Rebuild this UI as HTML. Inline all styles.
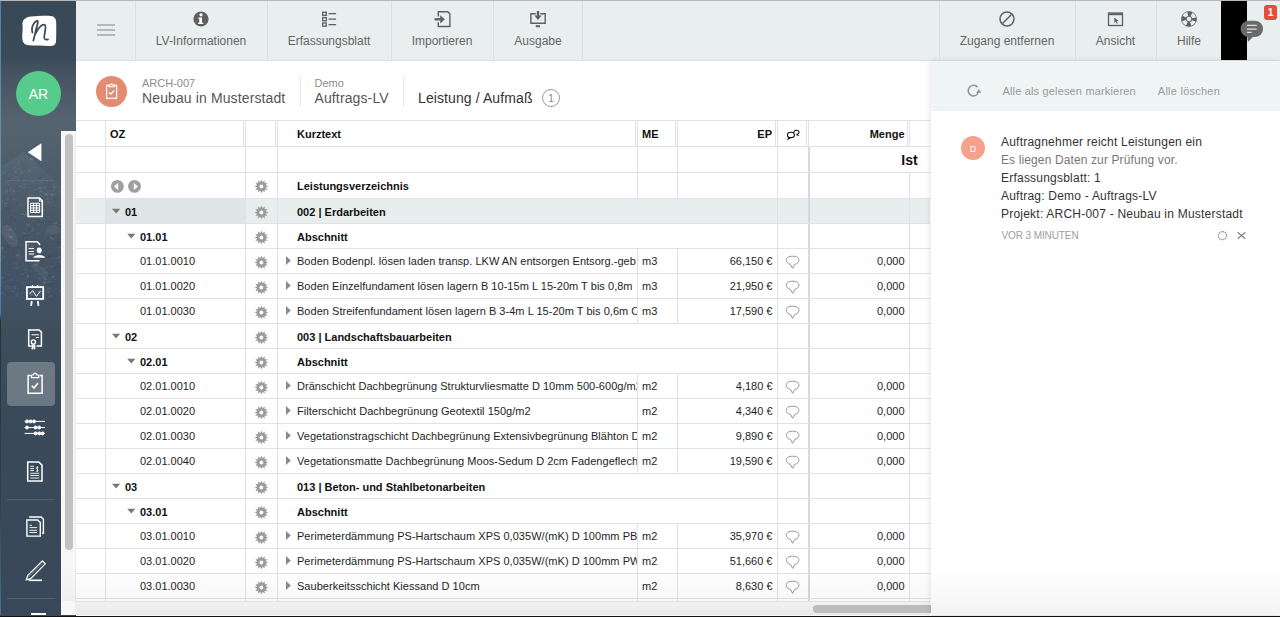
<!DOCTYPE html><html><head><meta charset="utf-8"><title>LV</title><style>
*{margin:0;padding:0;box-sizing:border-box}
html,body{width:1280px;height:617px;overflow:hidden;background:#fff;font-family:"Liberation Sans",sans-serif}
.t{position:absolute;white-space:nowrap}
.r{position:absolute}
svg{position:absolute;overflow:visible}
</style></head><body>
<div class="r" style="left:76px;top:1px;width:1204px;height:59px;background:#e9eeee;"></div>
<div class="r" style="left:76px;top:60px;width:1204px;height:1px;background:#dce1e2;"></div>
<div class="r" style="left:135px;top:1px;width:1px;height:59px;background:#dadfe0;"></div>
<div class="r" style="left:267px;top:1px;width:1px;height:59px;background:#dadfe0;"></div>
<div class="r" style="left:391px;top:1px;width:1px;height:59px;background:#dadfe0;"></div>
<div class="r" style="left:493px;top:1px;width:1px;height:59px;background:#dadfe0;"></div>
<div class="r" style="left:582px;top:1px;width:1px;height:59px;background:#dadfe0;"></div>
<div class="r" style="left:939px;top:1px;width:1px;height:59px;background:#dadfe0;"></div>
<div class="r" style="left:1075px;top:1px;width:1px;height:59px;background:#dadfe0;"></div>
<div class="r" style="left:1156px;top:1px;width:1px;height:59px;background:#dadfe0;"></div>
<div class="r" style="left:97px;top:24px;width:18px;height:2px;background:#b4b9bc;"></div>
<div class="r" style="left:97px;top:29px;width:18px;height:2px;background:#b4b9bc;"></div>
<div class="r" style="left:97px;top:34px;width:18px;height:2px;background:#b4b9bc;"></div>
<div class="t" style="top:30.84px;font-size:12px;line-height:20px;color:#666;left:51px;width:300px;text-align:center;">LV-Informationen</div>
<div class="t" style="top:30.84px;font-size:12px;line-height:20px;color:#666;left:179px;width:300px;text-align:center;">Erfassungsblatt</div>
<div class="t" style="top:30.84px;font-size:12px;line-height:20px;color:#666;left:292px;width:300px;text-align:center;">Importieren</div>
<div class="t" style="top:30.84px;font-size:12px;line-height:20px;color:#666;left:388px;width:300px;text-align:center;">Ausgabe</div>
<div class="t" style="top:30.84px;font-size:12px;line-height:20px;color:#666;left:857px;width:300px;text-align:center;">Zugang entfernen</div>
<div class="t" style="top:30.84px;font-size:12px;line-height:20px;color:#666;left:965.5px;width:300px;text-align:center;">Ansicht</div>
<div class="t" style="top:30.84px;font-size:12px;line-height:20px;color:#666;left:1039px;width:300px;text-align:center;">Hilfe</div>
<svg style="left:0;top:0" width="1" height="1"><circle cx="201" cy="19" r="7.6" fill="#606060"/><circle cx="201" cy="14.8" r="1.6" fill="#fff"/><path d="M199 17.6h3v5.2h1.3v1.3h-5.3v-1.3h1.3v-3.9h-1.3z" fill="#fff"/></svg>
<svg style="left:0;top:0" width="1" height="1" fill="none" stroke="#606060" stroke-width="1.3"><rect x="322.7" y="12.2" width="3.6" height="3.2"/><rect x="322.7" y="17.6" width="3.6" height="3.2"/><rect x="322.7" y="23" width="3.6" height="3.2"/><path d="M328.5 13.6h7.6M328.5 19.1h7.6M328.5 24.6h7.6" stroke-width="1.4"/></svg>
<svg style="left:0;top:0" width="1" height="1" fill="none" stroke="#606060" stroke-width="1.4"><path d="M438.3 16.5V11.8h9.5l2.1 2.1v12.6h-11.6v-4.3"/><path d="M434.6 19.3h6" stroke-width="2.4"/><path d="M440.2 15.2l4.7 4.1-4.7 4.1z" fill="#606060" stroke="none"/></svg>
<svg style="left:0;top:0" width="1" height="1" fill="none" stroke="#606060" stroke-width="1.4"><path d="M535.8 13.7h-4.9v9.5h14.3v-9.5h-4.9"/><path d="M538 11v5" stroke-width="2.4"/><path d="M534.4 15.6h7.2L538 20z" fill="#606060" stroke="none"/><rect x="535.8" y="25.2" width="4.3" height="2" fill="#606060" stroke="none"/></svg>
<svg style="left:0;top:0" width="1" height="1" fill="none" stroke="#606060" stroke-width="1.5"><circle cx="1007" cy="19" r="7"/><path d="M1011.8 14.2l-9.6 9.6"/></svg>
<svg style="left:0;top:0" width="1" height="1" fill="none" stroke="#606060" stroke-width="1.3"><rect x="1108.5" y="13" width="14" height="12.5"/><path d="M1108.5 14.2h14" stroke-width="2"/><path d="M1114.3 17.5l4.3 3.2-2 .3 1.2 2.2-.9.5-1.2-2.2-1.4 1.4z" fill="#606060" stroke="none"/></svg>
<svg style="left:0;top:0" width="1" height="1"><circle cx="1189" cy="19" r="7.6" fill="#606060"/><circle cx="1189" cy="19" r="2.3" fill="#e9eeee"/><circle cx="1189" cy="19" r="5.4" fill="none" stroke="#e9eeee" stroke-width="4.2" stroke-dasharray="4.4 4.08" stroke-dashoffset="-2.04"/><circle cx="1189" cy="19" r="7.6" fill="none" stroke="#606060" stroke-width="0.6"/></svg>
<div class="r" style="left:1221px;top:1px;width:26px;height:59px;background:#000;"></div>
<svg style="left:0;top:0" width="1" height="1"><rect x="1240.6" y="20.7" width="22.4" height="16.4" rx="8.2" ry="8.2" fill="#6a6a6a"/><path d="M1247 34.5L1253.8 36L1248 42z" fill="#6a6a6a"/><path d="M1247 25.3h9.7M1247 29.1h9.7M1247 32.3h4.6" stroke="#dedede" stroke-width="1.2"/></svg>
<div class="r" style="left:1264px;top:5px;width:13px;height:15px;background:#e84c3d;border-radius:3px"></div>
<div class="t" style="top:3.04px;font-size:10px;line-height:20px;color:#fff;font-weight:bold;left:1120.5px;width:300px;text-align:center;">1</div>
<div class="r" style="left:96px;top:76px;width:31px;height:31px;border-radius:50%;background:#e38b73"></div>
<svg style="left:0;top:0" width="1" height="1" fill="none" stroke="#fff" stroke-width="1.2"><path d="M109 85.3h-2.4v13h10v-13h-2.4"/><path d="M109 86.6h5.2v-1.6h-1.3l-1.3-1.1-1.3 1.1h-1.3z"/><path d="M108.9 92.2l1.9 1.9 3.4-3.6" stroke-width="1.3"/></svg>
<div class="t" style="top:72.89px;font-size:11px;line-height:20px;color:#8c8c8c;left:142px;">ARCH-007</div>
<div class="t" style="top:88.15px;font-size:14px;line-height:20px;color:#555;letter-spacing:0.12px;left:142px;">Neubau in Musterstadt</div>
<div class="r" style="left:300px;top:76px;width:1px;height:31px;background:#e3e8e9;"></div>
<div class="t" style="top:72.89px;font-size:11px;line-height:20px;color:#8c8c8c;left:314.5px;">Demo</div>
<div class="t" style="top:88.15px;font-size:14px;line-height:20px;color:#555;letter-spacing:0.12px;left:314.5px;">Auftrags-LV</div>
<div class="r" style="left:403px;top:76px;width:1px;height:31px;background:#e3e8e9;"></div>
<div class="t" style="top:88.15px;font-size:14px;line-height:20px;color:#333;letter-spacing:0.1px;left:418px;">Leistung / Aufmaß</div>
<div class="r" style="left:542px;top:89px;width:18px;height:18px;border-radius:50%;border:1px solid #9a9a9a"></div>
<div class="t" style="top:89.03px;font-size:10px;line-height:20px;color:#888;left:401px;width:300px;text-align:center;">1</div>
<div class="r" style="left:76px;top:120px;width:854px;height:1px;background:#dfe3e5;"></div>
<div class="r" style="left:76px;top:146px;width:854px;height:1px;background:#dfe3e5;"></div>
<div class="r" style="left:105px;top:121px;width:1px;height:25px;background:#dfe3e5;"></div>
<div class="r" style="left:243px;top:121px;width:1px;height:25px;background:#dfe3e5;"></div>
<div class="r" style="left:245px;top:121px;width:1px;height:25px;background:#dfe3e5;"></div>
<div class="r" style="left:275px;top:121px;width:1px;height:25px;background:#dfe3e5;"></div>
<div class="r" style="left:277px;top:121px;width:1px;height:25px;background:#dfe3e5;"></div>
<div class="r" style="left:635px;top:121px;width:1px;height:25px;background:#dfe3e5;"></div>
<div class="r" style="left:637px;top:121px;width:1px;height:25px;background:#dfe3e5;"></div>
<div class="r" style="left:675px;top:121px;width:1px;height:25px;background:#dfe3e5;"></div>
<div class="r" style="left:677px;top:121px;width:1px;height:25px;background:#dfe3e5;"></div>
<div class="r" style="left:775px;top:121px;width:1px;height:25px;background:#dfe3e5;"></div>
<div class="r" style="left:777px;top:121px;width:1px;height:25px;background:#dfe3e5;"></div>
<div class="r" style="left:806px;top:121px;width:1px;height:25px;background:#dfe3e5;"></div>
<div class="r" style="left:808px;top:121px;width:1px;height:25px;background:#dfe3e5;"></div>
<div class="r" style="left:907px;top:121px;width:1px;height:25px;background:#dfe3e5;"></div>
<div class="r" style="left:909px;top:121px;width:1px;height:25px;background:#dfe3e5;"></div>
<div class="t" style="top:123.89px;font-size:11px;line-height:20px;color:#111;font-weight:bold;left:110px;">OZ</div>
<div class="t" style="top:123.89px;font-size:11px;line-height:20px;color:#111;font-weight:bold;left:297px;">Kurztext</div>
<div class="t" style="top:123.89px;font-size:11px;line-height:20px;color:#111;font-weight:bold;left:642px;">ME</div>
<div class="t" style="top:123.89px;font-size:11px;line-height:20px;color:#111;font-weight:bold;right:508px;text-align:right;">EP</div>
<div class="t" style="top:123.89px;font-size:11px;line-height:20px;color:#111;font-weight:bold;right:375.5px;text-align:right;">Menge</div>
<svg style="left:0;top:0" width="1" height="1" fill="none" stroke="#111" stroke-width="1.1"><ellipse cx="790.9" cy="134.9" rx="3.5" ry="2.7"/><path d="M789.2 137.4l-0.8 1.5 1.8-0.9" stroke-width="1.2"/><path d="M793.9 132.8a2.6 2 0 1 1 3.2 1.4l0.7 0.8-1.4-0.4"/></svg>
<div class="r" style="left:76px;top:172px;width:854px;height:1px;background:#dfe3e5;"></div>
<div class="r" style="left:105px;top:147px;width:1px;height:25px;background:#dfe3e5;"></div>
<div class="r" style="left:245px;top:147px;width:1px;height:25px;background:#dfe3e5;"></div>
<div class="r" style="left:277px;top:147px;width:1px;height:25px;background:#dfe3e5;"></div>
<div class="r" style="left:637px;top:147px;width:1px;height:25px;background:#dfe3e5;"></div>
<div class="r" style="left:677px;top:147px;width:1px;height:25px;background:#dfe3e5;"></div>
<div class="r" style="left:777px;top:147px;width:1px;height:25px;background:#dfe3e5;"></div>
<div class="r" style="left:808px;top:147px;width:2px;height:25px;background:#d6dadc;"></div>
<div class="t" style="top:149.65px;font-size:14px;line-height:20px;color:#111;font-weight:bold;right:362.29999999999995px;text-align:right;">Ist</div>
<div class="r" style="left:76px;top:198px;width:854px;height:1px;background:#dfe3e5;"></div>
<div class="r" style="left:105px;top:173px;width:1px;height:25px;background:#dfe3e5;"></div>
<div class="r" style="left:245px;top:173px;width:1px;height:25px;background:#dfe3e5;"></div>
<div class="r" style="left:277px;top:173px;width:1px;height:25px;background:#dfe3e5;"></div>
<div class="r" style="left:637px;top:173px;width:1px;height:25px;background:#dfe3e5;"></div>
<div class="r" style="left:677px;top:173px;width:1px;height:25px;background:#dfe3e5;"></div>
<div class="r" style="left:777px;top:173px;width:1px;height:25px;background:#dfe3e5;"></div>
<div class="r" style="left:909px;top:173px;width:1px;height:25px;background:#dfe3e5;"></div>
<div class="r" style="left:808px;top:173px;width:2px;height:25px;background:#d6dadc;"></div>
<svg style="left:0;top:0" width="1" height="1"><circle cx="117.4" cy="186.4" r="6.4" fill="#9f9f9f"/><path d="M114.1 186.4l4-3.6v7.2z" fill="#fff"/><circle cx="134.5" cy="186.4" r="6.4" fill="#9f9f9f"/><path d="M137.8 186.4l-4-3.6v7.2z" fill="#fff"/></svg>
<svg style="left:0;top:0" width="1" height="1"><polygon points="261.40,179.80 262.51,182.25 264.70,180.68 264.44,183.36 267.12,183.10 265.55,185.29 268.00,186.40 265.55,187.51 267.12,189.70 264.44,189.44 264.70,192.12 262.51,190.55 261.40,193.00 260.29,190.55 258.10,192.12 258.36,189.44 255.68,189.70 257.25,187.51 254.80,186.40 257.25,185.29 255.68,183.10 258.36,183.36 258.10,180.68 260.29,182.25" fill="#9c9c9c" stroke="#9c9c9c" stroke-width="0.3" stroke-linejoin="round"/><circle cx="261.4" cy="186.4" r="4.6" fill="#9c9c9c"/><circle cx="261.4" cy="186.4" r="1.9" fill="#fff"/></svg>
<div class="t" style="top:176.19px;font-size:11px;line-height:20px;color:#111;font-weight:bold;left:297px;">Leistungsverzeichnis</div>
<div class="r" style="left:76px;top:199px;width:854px;height:24px;background:#e8eeee;"></div>
<div class="r" style="left:106px;top:199px;width:139px;height:24px;background:#dfe4e6;"></div>
<div class="r" style="left:76px;top:223px;width:854px;height:1px;background:#dfe3e5;"></div>
<div class="r" style="left:105px;top:199px;width:1px;height:24px;background:#dfe3e5;"></div>
<div class="r" style="left:245px;top:199px;width:1px;height:24px;background:#dfe3e5;"></div>
<div class="r" style="left:277px;top:199px;width:1px;height:24px;background:#dfe3e5;"></div>
<div class="r" style="left:777px;top:199px;width:1px;height:24px;background:#dfe3e5;"></div>
<div class="r" style="left:909px;top:199px;width:1px;height:24px;background:#dfe3e5;"></div>
<div class="r" style="left:808px;top:199px;width:2px;height:24px;background:#d6dadc;"></div>
<svg style="left:0;top:0" width="1" height="1"><polygon points="261.40,205.90 262.51,208.35 264.70,206.78 264.44,209.46 267.12,209.20 265.55,211.39 268.00,212.50 265.55,213.61 267.12,215.80 264.44,215.54 264.70,218.22 262.51,216.65 261.40,219.10 260.29,216.65 258.10,218.22 258.36,215.54 255.68,215.80 257.25,213.61 254.80,212.50 257.25,211.39 255.68,209.20 258.36,209.46 258.10,206.78 260.29,208.35" fill="#9c9c9c" stroke="#9c9c9c" stroke-width="0.3" stroke-linejoin="round"/><circle cx="261.4" cy="212.5" r="4.6" fill="#9c9c9c"/><circle cx="261.4" cy="212.5" r="1.9" fill="#fff"/></svg>
<svg style="left:0;top:0" width="1" height="1"><path d="M112 208.8h8.2l-4.1 4.6z" fill="#787878"/></svg>
<div class="t" style="top:202.19px;font-size:11px;line-height:20px;color:#111;font-weight:bold;left:125px;">01</div>
<div class="t" style="top:202.19px;font-size:11px;line-height:20px;color:#111;font-weight:bold;left:297px;">002 | Erdarbeiten</div>
<div class="r" style="left:76px;top:248px;width:854px;height:1px;background:#dfe3e5;"></div>
<div class="r" style="left:105px;top:224px;width:1px;height:24px;background:#dfe3e5;"></div>
<div class="r" style="left:245px;top:224px;width:1px;height:24px;background:#dfe3e5;"></div>
<div class="r" style="left:277px;top:224px;width:1px;height:24px;background:#dfe3e5;"></div>
<div class="r" style="left:777px;top:224px;width:1px;height:24px;background:#dfe3e5;"></div>
<div class="r" style="left:909px;top:224px;width:1px;height:24px;background:#dfe3e5;"></div>
<div class="r" style="left:808px;top:224px;width:2px;height:24px;background:#d6dadc;"></div>
<svg style="left:0;top:0" width="1" height="1"><polygon points="261.40,230.90 262.51,233.35 264.70,231.78 264.44,234.46 267.12,234.20 265.55,236.39 268.00,237.50 265.55,238.61 267.12,240.80 264.44,240.54 264.70,243.22 262.51,241.65 261.40,244.10 260.29,241.65 258.10,243.22 258.36,240.54 255.68,240.80 257.25,238.61 254.80,237.50 257.25,236.39 255.68,234.20 258.36,234.46 258.10,231.78 260.29,233.35" fill="#9c9c9c" stroke="#9c9c9c" stroke-width="0.3" stroke-linejoin="round"/><circle cx="261.4" cy="237.5" r="4.6" fill="#9c9c9c"/><circle cx="261.4" cy="237.5" r="1.9" fill="#fff"/></svg>
<svg style="left:0;top:0" width="1" height="1"><path d="M127.2 233.8h8.2l-4.1 4.6z" fill="#787878"/></svg>
<div class="t" style="top:227.19px;font-size:11px;line-height:20px;color:#111;font-weight:bold;left:140px;">01.01</div>
<div class="t" style="top:227.19px;font-size:11px;line-height:20px;color:#111;font-weight:bold;left:297px;">Abschnitt</div>
<div class="r" style="left:76px;top:273px;width:854px;height:1px;background:#dfe3e5;"></div>
<div class="r" style="left:105px;top:249px;width:1px;height:24px;background:#dfe3e5;"></div>
<div class="r" style="left:245px;top:249px;width:1px;height:24px;background:#dfe3e5;"></div>
<div class="r" style="left:277px;top:249px;width:1px;height:24px;background:#dfe3e5;"></div>
<div class="r" style="left:637px;top:249px;width:1px;height:24px;background:#dfe3e5;"></div>
<div class="r" style="left:677px;top:249px;width:1px;height:24px;background:#dfe3e5;"></div>
<div class="r" style="left:777px;top:249px;width:1px;height:24px;background:#dfe3e5;"></div>
<div class="r" style="left:909px;top:249px;width:1px;height:24px;background:#dfe3e5;"></div>
<div class="r" style="left:808px;top:249px;width:2px;height:24px;background:#d6dadc;"></div>
<svg style="left:0;top:0" width="1" height="1"><polygon points="261.40,255.90 262.51,258.35 264.70,256.78 264.44,259.46 267.12,259.20 265.55,261.39 268.00,262.50 265.55,263.61 267.12,265.80 264.44,265.54 264.70,268.22 262.51,266.65 261.40,269.10 260.29,266.65 258.10,268.22 258.36,265.54 255.68,265.80 257.25,263.61 254.80,262.50 257.25,261.39 255.68,259.20 258.36,259.46 258.10,256.78 260.29,258.35" fill="#9c9c9c" stroke="#9c9c9c" stroke-width="0.3" stroke-linejoin="round"/><circle cx="261.4" cy="262.5" r="4.6" fill="#9c9c9c"/><circle cx="261.4" cy="262.5" r="1.9" fill="#fff"/></svg>
<div class="t" style="top:251.19px;font-size:11px;line-height:20px;color:#1e1e1e;left:140px;">01.01.0010</div>
<svg style="left:0;top:0" width="1" height="1"><path d="M286 256l4.8 4.5-4.8 4.5z" fill="#8a8a8a"/></svg>
<div class="r" style="left:297px;top:249px;width:340px;height:24px;overflow:hidden">
<div class="t" style="top:2.19px;font-size:11px;line-height:20px;color:#1e1e1e;letter-spacing:0.03px;left:0px;">Boden Bodenpl. lösen laden transp. LKW AN entsorgen Entsorg.-geb</div>
</div>
<div class="t" style="top:251.19px;font-size:11px;line-height:20px;color:#1e1e1e;left:642px;">m3</div>
<div class="t" style="top:251.19px;font-size:11px;line-height:20px;color:#1e1e1e;right:507.5px;text-align:right;">66,150 €</div>
<svg style="left:0;top:0" width="1" height="1"><path d="M790.4 264.3C787.1 263.70000000000005 786.3000000000001 261.6 786.3000000000001 260.20000000000005C786.3000000000001 257.6 788.6 256.20000000000005 792.6 256.20000000000005S798.9 257.6 798.9 260.20000000000005C798.9 262.0 797.6 263.8 794.9 264.3L792.6 268.3z" fill="none" stroke="#8a8a8a" stroke-width="0.9"/></svg>
<div class="t" style="top:251.19px;font-size:11px;line-height:20px;color:#1e1e1e;right:375.5px;text-align:right;">0,000</div>
<div class="r" style="left:76px;top:298px;width:854px;height:1px;background:#dfe3e5;"></div>
<div class="r" style="left:105px;top:274px;width:1px;height:24px;background:#dfe3e5;"></div>
<div class="r" style="left:245px;top:274px;width:1px;height:24px;background:#dfe3e5;"></div>
<div class="r" style="left:277px;top:274px;width:1px;height:24px;background:#dfe3e5;"></div>
<div class="r" style="left:637px;top:274px;width:1px;height:24px;background:#dfe3e5;"></div>
<div class="r" style="left:677px;top:274px;width:1px;height:24px;background:#dfe3e5;"></div>
<div class="r" style="left:777px;top:274px;width:1px;height:24px;background:#dfe3e5;"></div>
<div class="r" style="left:909px;top:274px;width:1px;height:24px;background:#dfe3e5;"></div>
<div class="r" style="left:808px;top:274px;width:2px;height:24px;background:#d6dadc;"></div>
<svg style="left:0;top:0" width="1" height="1"><polygon points="261.40,280.90 262.51,283.35 264.70,281.78 264.44,284.46 267.12,284.20 265.55,286.39 268.00,287.50 265.55,288.61 267.12,290.80 264.44,290.54 264.70,293.22 262.51,291.65 261.40,294.10 260.29,291.65 258.10,293.22 258.36,290.54 255.68,290.80 257.25,288.61 254.80,287.50 257.25,286.39 255.68,284.20 258.36,284.46 258.10,281.78 260.29,283.35" fill="#9c9c9c" stroke="#9c9c9c" stroke-width="0.3" stroke-linejoin="round"/><circle cx="261.4" cy="287.5" r="4.6" fill="#9c9c9c"/><circle cx="261.4" cy="287.5" r="1.9" fill="#fff"/></svg>
<div class="t" style="top:276.19px;font-size:11px;line-height:20px;color:#1e1e1e;left:140px;">01.01.0020</div>
<svg style="left:0;top:0" width="1" height="1"><path d="M286 281l4.8 4.5-4.8 4.5z" fill="#8a8a8a"/></svg>
<div class="r" style="left:297px;top:274px;width:340px;height:24px;overflow:hidden">
<div class="t" style="top:2.19px;font-size:11px;line-height:20px;color:#1e1e1e;letter-spacing:0.03px;left:0px;">Boden Einzelfundament lösen lagern B 10-15m L 15-20m T bis 0,8m</div>
</div>
<div class="t" style="top:276.19px;font-size:11px;line-height:20px;color:#1e1e1e;left:642px;">m3</div>
<div class="t" style="top:276.19px;font-size:11px;line-height:20px;color:#1e1e1e;right:507.5px;text-align:right;">21,950 €</div>
<svg style="left:0;top:0" width="1" height="1"><path d="M790.4 289.3C787.1 288.70000000000005 786.3000000000001 286.6 786.3000000000001 285.20000000000005C786.3000000000001 282.6 788.6 281.20000000000005 792.6 281.20000000000005S798.9 282.6 798.9 285.20000000000005C798.9 287.0 797.6 288.8 794.9 289.3L792.6 293.3z" fill="none" stroke="#8a8a8a" stroke-width="0.9"/></svg>
<div class="t" style="top:276.19px;font-size:11px;line-height:20px;color:#1e1e1e;right:375.5px;text-align:right;">0,000</div>
<div class="r" style="left:76px;top:323px;width:854px;height:1px;background:#dfe3e5;"></div>
<div class="r" style="left:105px;top:299px;width:1px;height:24px;background:#dfe3e5;"></div>
<div class="r" style="left:245px;top:299px;width:1px;height:24px;background:#dfe3e5;"></div>
<div class="r" style="left:277px;top:299px;width:1px;height:24px;background:#dfe3e5;"></div>
<div class="r" style="left:637px;top:299px;width:1px;height:24px;background:#dfe3e5;"></div>
<div class="r" style="left:677px;top:299px;width:1px;height:24px;background:#dfe3e5;"></div>
<div class="r" style="left:777px;top:299px;width:1px;height:24px;background:#dfe3e5;"></div>
<div class="r" style="left:909px;top:299px;width:1px;height:24px;background:#dfe3e5;"></div>
<div class="r" style="left:808px;top:299px;width:2px;height:24px;background:#d6dadc;"></div>
<svg style="left:0;top:0" width="1" height="1"><polygon points="261.40,305.90 262.51,308.35 264.70,306.78 264.44,309.46 267.12,309.20 265.55,311.39 268.00,312.50 265.55,313.61 267.12,315.80 264.44,315.54 264.70,318.22 262.51,316.65 261.40,319.10 260.29,316.65 258.10,318.22 258.36,315.54 255.68,315.80 257.25,313.61 254.80,312.50 257.25,311.39 255.68,309.20 258.36,309.46 258.10,306.78 260.29,308.35" fill="#9c9c9c" stroke="#9c9c9c" stroke-width="0.3" stroke-linejoin="round"/><circle cx="261.4" cy="312.5" r="4.6" fill="#9c9c9c"/><circle cx="261.4" cy="312.5" r="1.9" fill="#fff"/></svg>
<div class="t" style="top:301.19px;font-size:11px;line-height:20px;color:#1e1e1e;left:140px;">01.01.0030</div>
<svg style="left:0;top:0" width="1" height="1"><path d="M286 306l4.8 4.5-4.8 4.5z" fill="#8a8a8a"/></svg>
<div class="r" style="left:297px;top:299px;width:340px;height:24px;overflow:hidden">
<div class="t" style="top:2.19px;font-size:11px;line-height:20px;color:#1e1e1e;letter-spacing:0.03px;left:0px;">Boden Streifenfundament lösen lagern B 3-4m L 15-20m T bis 0,6m Oberboden</div>
</div>
<div class="t" style="top:301.19px;font-size:11px;line-height:20px;color:#1e1e1e;left:642px;">m3</div>
<div class="t" style="top:301.19px;font-size:11px;line-height:20px;color:#1e1e1e;right:507.5px;text-align:right;">17,590 €</div>
<svg style="left:0;top:0" width="1" height="1"><path d="M790.4 314.3C787.1 313.70000000000005 786.3000000000001 311.6 786.3000000000001 310.20000000000005C786.3000000000001 307.6 788.6 306.20000000000005 792.6 306.20000000000005S798.9 307.6 798.9 310.20000000000005C798.9 312.0 797.6 313.8 794.9 314.3L792.6 318.3z" fill="none" stroke="#8a8a8a" stroke-width="0.9"/></svg>
<div class="t" style="top:301.19px;font-size:11px;line-height:20px;color:#1e1e1e;right:375.5px;text-align:right;">0,000</div>
<div class="r" style="left:76px;top:348px;width:854px;height:1px;background:#dfe3e5;"></div>
<div class="r" style="left:105px;top:324px;width:1px;height:24px;background:#dfe3e5;"></div>
<div class="r" style="left:245px;top:324px;width:1px;height:24px;background:#dfe3e5;"></div>
<div class="r" style="left:277px;top:324px;width:1px;height:24px;background:#dfe3e5;"></div>
<div class="r" style="left:777px;top:324px;width:1px;height:24px;background:#dfe3e5;"></div>
<div class="r" style="left:909px;top:324px;width:1px;height:24px;background:#dfe3e5;"></div>
<div class="r" style="left:808px;top:324px;width:2px;height:24px;background:#d6dadc;"></div>
<svg style="left:0;top:0" width="1" height="1"><polygon points="261.40,330.90 262.51,333.35 264.70,331.78 264.44,334.46 267.12,334.20 265.55,336.39 268.00,337.50 265.55,338.61 267.12,340.80 264.44,340.54 264.70,343.22 262.51,341.65 261.40,344.10 260.29,341.65 258.10,343.22 258.36,340.54 255.68,340.80 257.25,338.61 254.80,337.50 257.25,336.39 255.68,334.20 258.36,334.46 258.10,331.78 260.29,333.35" fill="#9c9c9c" stroke="#9c9c9c" stroke-width="0.3" stroke-linejoin="round"/><circle cx="261.4" cy="337.5" r="4.6" fill="#9c9c9c"/><circle cx="261.4" cy="337.5" r="1.9" fill="#fff"/></svg>
<svg style="left:0;top:0" width="1" height="1"><path d="M112 333.8h8.2l-4.1 4.6z" fill="#787878"/></svg>
<div class="t" style="top:327.19px;font-size:11px;line-height:20px;color:#111;font-weight:bold;left:125px;">02</div>
<div class="t" style="top:327.19px;font-size:11px;line-height:20px;color:#111;font-weight:bold;left:297px;">003 | Landschaftsbauarbeiten</div>
<div class="r" style="left:76px;top:373px;width:854px;height:1px;background:#dfe3e5;"></div>
<div class="r" style="left:105px;top:349px;width:1px;height:24px;background:#dfe3e5;"></div>
<div class="r" style="left:245px;top:349px;width:1px;height:24px;background:#dfe3e5;"></div>
<div class="r" style="left:277px;top:349px;width:1px;height:24px;background:#dfe3e5;"></div>
<div class="r" style="left:777px;top:349px;width:1px;height:24px;background:#dfe3e5;"></div>
<div class="r" style="left:909px;top:349px;width:1px;height:24px;background:#dfe3e5;"></div>
<div class="r" style="left:808px;top:349px;width:2px;height:24px;background:#d6dadc;"></div>
<svg style="left:0;top:0" width="1" height="1"><polygon points="261.40,355.90 262.51,358.35 264.70,356.78 264.44,359.46 267.12,359.20 265.55,361.39 268.00,362.50 265.55,363.61 267.12,365.80 264.44,365.54 264.70,368.22 262.51,366.65 261.40,369.10 260.29,366.65 258.10,368.22 258.36,365.54 255.68,365.80 257.25,363.61 254.80,362.50 257.25,361.39 255.68,359.20 258.36,359.46 258.10,356.78 260.29,358.35" fill="#9c9c9c" stroke="#9c9c9c" stroke-width="0.3" stroke-linejoin="round"/><circle cx="261.4" cy="362.5" r="4.6" fill="#9c9c9c"/><circle cx="261.4" cy="362.5" r="1.9" fill="#fff"/></svg>
<svg style="left:0;top:0" width="1" height="1"><path d="M127.2 358.8h8.2l-4.1 4.6z" fill="#787878"/></svg>
<div class="t" style="top:352.19px;font-size:11px;line-height:20px;color:#111;font-weight:bold;left:140px;">02.01</div>
<div class="t" style="top:352.19px;font-size:11px;line-height:20px;color:#111;font-weight:bold;left:297px;">Abschnitt</div>
<div class="r" style="left:76px;top:398px;width:854px;height:1px;background:#dfe3e5;"></div>
<div class="r" style="left:105px;top:374px;width:1px;height:24px;background:#dfe3e5;"></div>
<div class="r" style="left:245px;top:374px;width:1px;height:24px;background:#dfe3e5;"></div>
<div class="r" style="left:277px;top:374px;width:1px;height:24px;background:#dfe3e5;"></div>
<div class="r" style="left:637px;top:374px;width:1px;height:24px;background:#dfe3e5;"></div>
<div class="r" style="left:677px;top:374px;width:1px;height:24px;background:#dfe3e5;"></div>
<div class="r" style="left:777px;top:374px;width:1px;height:24px;background:#dfe3e5;"></div>
<div class="r" style="left:909px;top:374px;width:1px;height:24px;background:#dfe3e5;"></div>
<div class="r" style="left:808px;top:374px;width:2px;height:24px;background:#d6dadc;"></div>
<svg style="left:0;top:0" width="1" height="1"><polygon points="261.40,380.90 262.51,383.35 264.70,381.78 264.44,384.46 267.12,384.20 265.55,386.39 268.00,387.50 265.55,388.61 267.12,390.80 264.44,390.54 264.70,393.22 262.51,391.65 261.40,394.10 260.29,391.65 258.10,393.22 258.36,390.54 255.68,390.80 257.25,388.61 254.80,387.50 257.25,386.39 255.68,384.20 258.36,384.46 258.10,381.78 260.29,383.35" fill="#9c9c9c" stroke="#9c9c9c" stroke-width="0.3" stroke-linejoin="round"/><circle cx="261.4" cy="387.5" r="4.6" fill="#9c9c9c"/><circle cx="261.4" cy="387.5" r="1.9" fill="#fff"/></svg>
<div class="t" style="top:376.19px;font-size:11px;line-height:20px;color:#1e1e1e;left:140px;">02.01.0010</div>
<svg style="left:0;top:0" width="1" height="1"><path d="M286 381l4.8 4.5-4.8 4.5z" fill="#8a8a8a"/></svg>
<div class="r" style="left:297px;top:374px;width:340px;height:24px;overflow:hidden">
<div class="t" style="top:2.19px;font-size:11px;line-height:20px;color:#1e1e1e;letter-spacing:0.03px;left:0px;">Dränschicht Dachbegrünung Strukturvliesmatte D 10mm 500-600g/m2</div>
</div>
<div class="t" style="top:376.19px;font-size:11px;line-height:20px;color:#1e1e1e;left:642px;">m2</div>
<div class="t" style="top:376.19px;font-size:11px;line-height:20px;color:#1e1e1e;right:507.5px;text-align:right;">4,180 €</div>
<svg style="left:0;top:0" width="1" height="1"><path d="M790.4 389.3C787.1 388.70000000000005 786.3000000000001 386.6 786.3000000000001 385.20000000000005C786.3000000000001 382.6 788.6 381.20000000000005 792.6 381.20000000000005S798.9 382.6 798.9 385.20000000000005C798.9 387.0 797.6 388.8 794.9 389.3L792.6 393.3z" fill="none" stroke="#8a8a8a" stroke-width="0.9"/></svg>
<div class="t" style="top:376.19px;font-size:11px;line-height:20px;color:#1e1e1e;right:375.5px;text-align:right;">0,000</div>
<div class="r" style="left:76px;top:423px;width:854px;height:1px;background:#dfe3e5;"></div>
<div class="r" style="left:105px;top:399px;width:1px;height:24px;background:#dfe3e5;"></div>
<div class="r" style="left:245px;top:399px;width:1px;height:24px;background:#dfe3e5;"></div>
<div class="r" style="left:277px;top:399px;width:1px;height:24px;background:#dfe3e5;"></div>
<div class="r" style="left:637px;top:399px;width:1px;height:24px;background:#dfe3e5;"></div>
<div class="r" style="left:677px;top:399px;width:1px;height:24px;background:#dfe3e5;"></div>
<div class="r" style="left:777px;top:399px;width:1px;height:24px;background:#dfe3e5;"></div>
<div class="r" style="left:909px;top:399px;width:1px;height:24px;background:#dfe3e5;"></div>
<div class="r" style="left:808px;top:399px;width:2px;height:24px;background:#d6dadc;"></div>
<svg style="left:0;top:0" width="1" height="1"><polygon points="261.40,405.90 262.51,408.35 264.70,406.78 264.44,409.46 267.12,409.20 265.55,411.39 268.00,412.50 265.55,413.61 267.12,415.80 264.44,415.54 264.70,418.22 262.51,416.65 261.40,419.10 260.29,416.65 258.10,418.22 258.36,415.54 255.68,415.80 257.25,413.61 254.80,412.50 257.25,411.39 255.68,409.20 258.36,409.46 258.10,406.78 260.29,408.35" fill="#9c9c9c" stroke="#9c9c9c" stroke-width="0.3" stroke-linejoin="round"/><circle cx="261.4" cy="412.5" r="4.6" fill="#9c9c9c"/><circle cx="261.4" cy="412.5" r="1.9" fill="#fff"/></svg>
<div class="t" style="top:401.19px;font-size:11px;line-height:20px;color:#1e1e1e;left:140px;">02.01.0020</div>
<svg style="left:0;top:0" width="1" height="1"><path d="M286 406l4.8 4.5-4.8 4.5z" fill="#8a8a8a"/></svg>
<div class="r" style="left:297px;top:399px;width:340px;height:24px;overflow:hidden">
<div class="t" style="top:2.19px;font-size:11px;line-height:20px;color:#1e1e1e;letter-spacing:0.03px;left:0px;">Filterschicht Dachbegrünung Geotextil 150g/m2</div>
</div>
<div class="t" style="top:401.19px;font-size:11px;line-height:20px;color:#1e1e1e;left:642px;">m2</div>
<div class="t" style="top:401.19px;font-size:11px;line-height:20px;color:#1e1e1e;right:507.5px;text-align:right;">4,340 €</div>
<svg style="left:0;top:0" width="1" height="1"><path d="M790.4 414.3C787.1 413.70000000000005 786.3000000000001 411.6 786.3000000000001 410.20000000000005C786.3000000000001 407.6 788.6 406.20000000000005 792.6 406.20000000000005S798.9 407.6 798.9 410.20000000000005C798.9 412.0 797.6 413.8 794.9 414.3L792.6 418.3z" fill="none" stroke="#8a8a8a" stroke-width="0.9"/></svg>
<div class="t" style="top:401.19px;font-size:11px;line-height:20px;color:#1e1e1e;right:375.5px;text-align:right;">0,000</div>
<div class="r" style="left:76px;top:448px;width:854px;height:1px;background:#dfe3e5;"></div>
<div class="r" style="left:105px;top:424px;width:1px;height:24px;background:#dfe3e5;"></div>
<div class="r" style="left:245px;top:424px;width:1px;height:24px;background:#dfe3e5;"></div>
<div class="r" style="left:277px;top:424px;width:1px;height:24px;background:#dfe3e5;"></div>
<div class="r" style="left:637px;top:424px;width:1px;height:24px;background:#dfe3e5;"></div>
<div class="r" style="left:677px;top:424px;width:1px;height:24px;background:#dfe3e5;"></div>
<div class="r" style="left:777px;top:424px;width:1px;height:24px;background:#dfe3e5;"></div>
<div class="r" style="left:909px;top:424px;width:1px;height:24px;background:#dfe3e5;"></div>
<div class="r" style="left:808px;top:424px;width:2px;height:24px;background:#d6dadc;"></div>
<svg style="left:0;top:0" width="1" height="1"><polygon points="261.40,430.90 262.51,433.35 264.70,431.78 264.44,434.46 267.12,434.20 265.55,436.39 268.00,437.50 265.55,438.61 267.12,440.80 264.44,440.54 264.70,443.22 262.51,441.65 261.40,444.10 260.29,441.65 258.10,443.22 258.36,440.54 255.68,440.80 257.25,438.61 254.80,437.50 257.25,436.39 255.68,434.20 258.36,434.46 258.10,431.78 260.29,433.35" fill="#9c9c9c" stroke="#9c9c9c" stroke-width="0.3" stroke-linejoin="round"/><circle cx="261.4" cy="437.5" r="4.6" fill="#9c9c9c"/><circle cx="261.4" cy="437.5" r="1.9" fill="#fff"/></svg>
<div class="t" style="top:426.19px;font-size:11px;line-height:20px;color:#1e1e1e;left:140px;">02.01.0030</div>
<svg style="left:0;top:0" width="1" height="1"><path d="M286 431l4.8 4.5-4.8 4.5z" fill="#8a8a8a"/></svg>
<div class="r" style="left:297px;top:424px;width:340px;height:24px;overflow:hidden">
<div class="t" style="top:2.19px;font-size:11px;line-height:20px;color:#1e1e1e;letter-spacing:0.03px;left:0px;">Vegetationstragschicht Dachbegrünung Extensivbegrünung Blähton D</div>
</div>
<div class="t" style="top:426.19px;font-size:11px;line-height:20px;color:#1e1e1e;left:642px;">m2</div>
<div class="t" style="top:426.19px;font-size:11px;line-height:20px;color:#1e1e1e;right:507.5px;text-align:right;">9,890 €</div>
<svg style="left:0;top:0" width="1" height="1"><path d="M790.4 439.3C787.1 438.70000000000005 786.3000000000001 436.6 786.3000000000001 435.20000000000005C786.3000000000001 432.6 788.6 431.20000000000005 792.6 431.20000000000005S798.9 432.6 798.9 435.20000000000005C798.9 437.0 797.6 438.8 794.9 439.3L792.6 443.3z" fill="none" stroke="#8a8a8a" stroke-width="0.9"/></svg>
<div class="t" style="top:426.19px;font-size:11px;line-height:20px;color:#1e1e1e;right:375.5px;text-align:right;">0,000</div>
<div class="r" style="left:76px;top:473px;width:854px;height:1px;background:#dfe3e5;"></div>
<div class="r" style="left:105px;top:449px;width:1px;height:24px;background:#dfe3e5;"></div>
<div class="r" style="left:245px;top:449px;width:1px;height:24px;background:#dfe3e5;"></div>
<div class="r" style="left:277px;top:449px;width:1px;height:24px;background:#dfe3e5;"></div>
<div class="r" style="left:637px;top:449px;width:1px;height:24px;background:#dfe3e5;"></div>
<div class="r" style="left:677px;top:449px;width:1px;height:24px;background:#dfe3e5;"></div>
<div class="r" style="left:777px;top:449px;width:1px;height:24px;background:#dfe3e5;"></div>
<div class="r" style="left:909px;top:449px;width:1px;height:24px;background:#dfe3e5;"></div>
<div class="r" style="left:808px;top:449px;width:2px;height:24px;background:#d6dadc;"></div>
<svg style="left:0;top:0" width="1" height="1"><polygon points="261.40,455.90 262.51,458.35 264.70,456.78 264.44,459.46 267.12,459.20 265.55,461.39 268.00,462.50 265.55,463.61 267.12,465.80 264.44,465.54 264.70,468.22 262.51,466.65 261.40,469.10 260.29,466.65 258.10,468.22 258.36,465.54 255.68,465.80 257.25,463.61 254.80,462.50 257.25,461.39 255.68,459.20 258.36,459.46 258.10,456.78 260.29,458.35" fill="#9c9c9c" stroke="#9c9c9c" stroke-width="0.3" stroke-linejoin="round"/><circle cx="261.4" cy="462.5" r="4.6" fill="#9c9c9c"/><circle cx="261.4" cy="462.5" r="1.9" fill="#fff"/></svg>
<div class="t" style="top:451.19px;font-size:11px;line-height:20px;color:#1e1e1e;left:140px;">02.01.0040</div>
<svg style="left:0;top:0" width="1" height="1"><path d="M286 456l4.8 4.5-4.8 4.5z" fill="#8a8a8a"/></svg>
<div class="r" style="left:297px;top:449px;width:340px;height:24px;overflow:hidden">
<div class="t" style="top:2.19px;font-size:11px;line-height:20px;color:#1e1e1e;letter-spacing:0.03px;left:0px;">Vegetationsmatte Dachbegrünung Moos-Sedum D 2cm Fadengeflecht</div>
</div>
<div class="t" style="top:451.19px;font-size:11px;line-height:20px;color:#1e1e1e;left:642px;">m2</div>
<div class="t" style="top:451.19px;font-size:11px;line-height:20px;color:#1e1e1e;right:507.5px;text-align:right;">19,590 €</div>
<svg style="left:0;top:0" width="1" height="1"><path d="M790.4 464.3C787.1 463.70000000000005 786.3000000000001 461.6 786.3000000000001 460.20000000000005C786.3000000000001 457.6 788.6 456.20000000000005 792.6 456.20000000000005S798.9 457.6 798.9 460.20000000000005C798.9 462.0 797.6 463.8 794.9 464.3L792.6 468.3z" fill="none" stroke="#8a8a8a" stroke-width="0.9"/></svg>
<div class="t" style="top:451.19px;font-size:11px;line-height:20px;color:#1e1e1e;right:375.5px;text-align:right;">0,000</div>
<div class="r" style="left:76px;top:498px;width:854px;height:1px;background:#dfe3e5;"></div>
<div class="r" style="left:105px;top:474px;width:1px;height:24px;background:#dfe3e5;"></div>
<div class="r" style="left:245px;top:474px;width:1px;height:24px;background:#dfe3e5;"></div>
<div class="r" style="left:277px;top:474px;width:1px;height:24px;background:#dfe3e5;"></div>
<div class="r" style="left:777px;top:474px;width:1px;height:24px;background:#dfe3e5;"></div>
<div class="r" style="left:909px;top:474px;width:1px;height:24px;background:#dfe3e5;"></div>
<div class="r" style="left:808px;top:474px;width:2px;height:24px;background:#d6dadc;"></div>
<svg style="left:0;top:0" width="1" height="1"><polygon points="261.40,480.90 262.51,483.35 264.70,481.78 264.44,484.46 267.12,484.20 265.55,486.39 268.00,487.50 265.55,488.61 267.12,490.80 264.44,490.54 264.70,493.22 262.51,491.65 261.40,494.10 260.29,491.65 258.10,493.22 258.36,490.54 255.68,490.80 257.25,488.61 254.80,487.50 257.25,486.39 255.68,484.20 258.36,484.46 258.10,481.78 260.29,483.35" fill="#9c9c9c" stroke="#9c9c9c" stroke-width="0.3" stroke-linejoin="round"/><circle cx="261.4" cy="487.5" r="4.6" fill="#9c9c9c"/><circle cx="261.4" cy="487.5" r="1.9" fill="#fff"/></svg>
<svg style="left:0;top:0" width="1" height="1"><path d="M112 483.8h8.2l-4.1 4.6z" fill="#787878"/></svg>
<div class="t" style="top:477.19px;font-size:11px;line-height:20px;color:#111;font-weight:bold;left:125px;">03</div>
<div class="t" style="top:477.19px;font-size:11px;line-height:20px;color:#111;font-weight:bold;left:297px;">013 | Beton- und Stahlbetonarbeiten</div>
<div class="r" style="left:76px;top:523px;width:854px;height:1px;background:#dfe3e5;"></div>
<div class="r" style="left:105px;top:499px;width:1px;height:24px;background:#dfe3e5;"></div>
<div class="r" style="left:245px;top:499px;width:1px;height:24px;background:#dfe3e5;"></div>
<div class="r" style="left:277px;top:499px;width:1px;height:24px;background:#dfe3e5;"></div>
<div class="r" style="left:777px;top:499px;width:1px;height:24px;background:#dfe3e5;"></div>
<div class="r" style="left:909px;top:499px;width:1px;height:24px;background:#dfe3e5;"></div>
<div class="r" style="left:808px;top:499px;width:2px;height:24px;background:#d6dadc;"></div>
<svg style="left:0;top:0" width="1" height="1"><polygon points="261.40,505.90 262.51,508.35 264.70,506.78 264.44,509.46 267.12,509.20 265.55,511.39 268.00,512.50 265.55,513.61 267.12,515.80 264.44,515.54 264.70,518.22 262.51,516.65 261.40,519.10 260.29,516.65 258.10,518.22 258.36,515.54 255.68,515.80 257.25,513.61 254.80,512.50 257.25,511.39 255.68,509.20 258.36,509.46 258.10,506.78 260.29,508.35" fill="#9c9c9c" stroke="#9c9c9c" stroke-width="0.3" stroke-linejoin="round"/><circle cx="261.4" cy="512.5" r="4.6" fill="#9c9c9c"/><circle cx="261.4" cy="512.5" r="1.9" fill="#fff"/></svg>
<svg style="left:0;top:0" width="1" height="1"><path d="M127.2 508.8h8.2l-4.1 4.6z" fill="#787878"/></svg>
<div class="t" style="top:502.19px;font-size:11px;line-height:20px;color:#111;font-weight:bold;left:140px;">03.01</div>
<div class="t" style="top:502.19px;font-size:11px;line-height:20px;color:#111;font-weight:bold;left:297px;">Abschnitt</div>
<div class="r" style="left:76px;top:548px;width:854px;height:1px;background:#dfe3e5;"></div>
<div class="r" style="left:105px;top:524px;width:1px;height:24px;background:#dfe3e5;"></div>
<div class="r" style="left:245px;top:524px;width:1px;height:24px;background:#dfe3e5;"></div>
<div class="r" style="left:277px;top:524px;width:1px;height:24px;background:#dfe3e5;"></div>
<div class="r" style="left:637px;top:524px;width:1px;height:24px;background:#dfe3e5;"></div>
<div class="r" style="left:677px;top:524px;width:1px;height:24px;background:#dfe3e5;"></div>
<div class="r" style="left:777px;top:524px;width:1px;height:24px;background:#dfe3e5;"></div>
<div class="r" style="left:909px;top:524px;width:1px;height:24px;background:#dfe3e5;"></div>
<div class="r" style="left:808px;top:524px;width:2px;height:24px;background:#d6dadc;"></div>
<svg style="left:0;top:0" width="1" height="1"><polygon points="261.40,530.90 262.51,533.35 264.70,531.78 264.44,534.46 267.12,534.20 265.55,536.39 268.00,537.50 265.55,538.61 267.12,540.80 264.44,540.54 264.70,543.22 262.51,541.65 261.40,544.10 260.29,541.65 258.10,543.22 258.36,540.54 255.68,540.80 257.25,538.61 254.80,537.50 257.25,536.39 255.68,534.20 258.36,534.46 258.10,531.78 260.29,533.35" fill="#9c9c9c" stroke="#9c9c9c" stroke-width="0.3" stroke-linejoin="round"/><circle cx="261.4" cy="537.5" r="4.6" fill="#9c9c9c"/><circle cx="261.4" cy="537.5" r="1.9" fill="#fff"/></svg>
<div class="t" style="top:526.19px;font-size:11px;line-height:20px;color:#1e1e1e;left:140px;">03.01.0010</div>
<svg style="left:0;top:0" width="1" height="1"><path d="M286 531l4.8 4.5-4.8 4.5z" fill="#8a8a8a"/></svg>
<div class="r" style="left:297px;top:524px;width:340px;height:24px;overflow:hidden">
<div class="t" style="top:2.19px;font-size:11px;line-height:20px;color:#1e1e1e;letter-spacing:0.03px;left:0px;">Perimeterdämmung PS-Hartschaum XPS 0,035W/(mK) D 100mm PB</div>
</div>
<div class="t" style="top:526.19px;font-size:11px;line-height:20px;color:#1e1e1e;left:642px;">m2</div>
<div class="t" style="top:526.19px;font-size:11px;line-height:20px;color:#1e1e1e;right:507.5px;text-align:right;">35,970 €</div>
<svg style="left:0;top:0" width="1" height="1"><path d="M790.4 539.3000000000001C787.1 538.7 786.3000000000001 536.6 786.3000000000001 535.2C786.3000000000001 532.6 788.6 531.2 792.6 531.2S798.9 532.6 798.9 535.2C798.9 537.0 797.6 538.8000000000001 794.9 539.3000000000001L792.6 543.3000000000001z" fill="none" stroke="#8a8a8a" stroke-width="0.9"/></svg>
<div class="t" style="top:526.19px;font-size:11px;line-height:20px;color:#1e1e1e;right:375.5px;text-align:right;">0,000</div>
<div class="r" style="left:76px;top:573px;width:854px;height:1px;background:#dfe3e5;"></div>
<div class="r" style="left:105px;top:549px;width:1px;height:24px;background:#dfe3e5;"></div>
<div class="r" style="left:245px;top:549px;width:1px;height:24px;background:#dfe3e5;"></div>
<div class="r" style="left:277px;top:549px;width:1px;height:24px;background:#dfe3e5;"></div>
<div class="r" style="left:637px;top:549px;width:1px;height:24px;background:#dfe3e5;"></div>
<div class="r" style="left:677px;top:549px;width:1px;height:24px;background:#dfe3e5;"></div>
<div class="r" style="left:777px;top:549px;width:1px;height:24px;background:#dfe3e5;"></div>
<div class="r" style="left:909px;top:549px;width:1px;height:24px;background:#dfe3e5;"></div>
<div class="r" style="left:808px;top:549px;width:2px;height:24px;background:#d6dadc;"></div>
<svg style="left:0;top:0" width="1" height="1"><polygon points="261.40,555.90 262.51,558.35 264.70,556.78 264.44,559.46 267.12,559.20 265.55,561.39 268.00,562.50 265.55,563.61 267.12,565.80 264.44,565.54 264.70,568.22 262.51,566.65 261.40,569.10 260.29,566.65 258.10,568.22 258.36,565.54 255.68,565.80 257.25,563.61 254.80,562.50 257.25,561.39 255.68,559.20 258.36,559.46 258.10,556.78 260.29,558.35" fill="#9c9c9c" stroke="#9c9c9c" stroke-width="0.3" stroke-linejoin="round"/><circle cx="261.4" cy="562.5" r="4.6" fill="#9c9c9c"/><circle cx="261.4" cy="562.5" r="1.9" fill="#fff"/></svg>
<div class="t" style="top:551.19px;font-size:11px;line-height:20px;color:#1e1e1e;left:140px;">03.01.0020</div>
<svg style="left:0;top:0" width="1" height="1"><path d="M286 556l4.8 4.5-4.8 4.5z" fill="#8a8a8a"/></svg>
<div class="r" style="left:297px;top:549px;width:340px;height:24px;overflow:hidden">
<div class="t" style="top:2.19px;font-size:11px;line-height:20px;color:#1e1e1e;letter-spacing:0.03px;left:0px;">Perimeterdämmung PS-Hartschaum XPS 0,035W/(mK) D 100mm PW</div>
</div>
<div class="t" style="top:551.19px;font-size:11px;line-height:20px;color:#1e1e1e;left:642px;">m2</div>
<div class="t" style="top:551.19px;font-size:11px;line-height:20px;color:#1e1e1e;right:507.5px;text-align:right;">51,660 €</div>
<svg style="left:0;top:0" width="1" height="1"><path d="M790.4 564.3000000000001C787.1 563.7 786.3000000000001 561.6 786.3000000000001 560.2C786.3000000000001 557.6 788.6 556.2 792.6 556.2S798.9 557.6 798.9 560.2C798.9 562.0 797.6 563.8000000000001 794.9 564.3000000000001L792.6 568.3000000000001z" fill="none" stroke="#8a8a8a" stroke-width="0.9"/></svg>
<div class="t" style="top:551.19px;font-size:11px;line-height:20px;color:#1e1e1e;right:375.5px;text-align:right;">0,000</div>
<div class="r" style="left:76px;top:598px;width:854px;height:1px;background:#dfe3e5;"></div>
<div class="r" style="left:105px;top:574px;width:1px;height:24px;background:#dfe3e5;"></div>
<div class="r" style="left:245px;top:574px;width:1px;height:24px;background:#dfe3e5;"></div>
<div class="r" style="left:277px;top:574px;width:1px;height:24px;background:#dfe3e5;"></div>
<div class="r" style="left:637px;top:574px;width:1px;height:24px;background:#dfe3e5;"></div>
<div class="r" style="left:677px;top:574px;width:1px;height:24px;background:#dfe3e5;"></div>
<div class="r" style="left:777px;top:574px;width:1px;height:24px;background:#dfe3e5;"></div>
<div class="r" style="left:909px;top:574px;width:1px;height:24px;background:#dfe3e5;"></div>
<div class="r" style="left:808px;top:574px;width:2px;height:24px;background:#d6dadc;"></div>
<svg style="left:0;top:0" width="1" height="1"><polygon points="261.40,580.90 262.51,583.35 264.70,581.78 264.44,584.46 267.12,584.20 265.55,586.39 268.00,587.50 265.55,588.61 267.12,590.80 264.44,590.54 264.70,593.22 262.51,591.65 261.40,594.10 260.29,591.65 258.10,593.22 258.36,590.54 255.68,590.80 257.25,588.61 254.80,587.50 257.25,586.39 255.68,584.20 258.36,584.46 258.10,581.78 260.29,583.35" fill="#9c9c9c" stroke="#9c9c9c" stroke-width="0.3" stroke-linejoin="round"/><circle cx="261.4" cy="587.5" r="4.6" fill="#9c9c9c"/><circle cx="261.4" cy="587.5" r="1.9" fill="#fff"/></svg>
<div class="t" style="top:576.19px;font-size:11px;line-height:20px;color:#1e1e1e;left:140px;">03.01.0030</div>
<svg style="left:0;top:0" width="1" height="1"><path d="M286 581l4.8 4.5-4.8 4.5z" fill="#8a8a8a"/></svg>
<div class="r" style="left:297px;top:574px;width:340px;height:24px;overflow:hidden">
<div class="t" style="top:2.19px;font-size:11px;line-height:20px;color:#1e1e1e;letter-spacing:0.03px;left:0px;">Sauberkeitsschicht Kiessand D 10cm</div>
</div>
<div class="t" style="top:576.19px;font-size:11px;line-height:20px;color:#1e1e1e;left:642px;">m2</div>
<div class="t" style="top:576.19px;font-size:11px;line-height:20px;color:#1e1e1e;right:507.5px;text-align:right;">8,630 €</div>
<svg style="left:0;top:0" width="1" height="1"><path d="M790.4 589.3000000000001C787.1 588.7 786.3000000000001 586.6 786.3000000000001 585.2C786.3000000000001 582.6 788.6 581.2 792.6 581.2S798.9 582.6 798.9 585.2C798.9 587.0 797.6 588.8000000000001 794.9 589.3000000000001L792.6 593.3000000000001z" fill="none" stroke="#8a8a8a" stroke-width="0.9"/></svg>
<div class="t" style="top:576.19px;font-size:11px;line-height:20px;color:#1e1e1e;right:375.5px;text-align:right;">0,000</div>
<div class="r" style="left:76px;top:601px;width:854px;height:1px;background:#dfe3e5;"></div>
<div class="r" style="left:105px;top:599px;width:1px;height:2px;background:#dfe3e5;"></div>
<div class="r" style="left:245px;top:599px;width:1px;height:2px;background:#dfe3e5;"></div>
<div class="r" style="left:277px;top:599px;width:1px;height:2px;background:#dfe3e5;"></div>
<div class="r" style="left:637px;top:599px;width:1px;height:2px;background:#dfe3e5;"></div>
<div class="r" style="left:677px;top:599px;width:1px;height:2px;background:#dfe3e5;"></div>
<div class="r" style="left:777px;top:599px;width:1px;height:2px;background:#dfe3e5;"></div>
<div class="r" style="left:909px;top:599px;width:1px;height:2px;background:#dfe3e5;"></div>
<div class="r" style="left:808px;top:599px;width:2px;height:2px;background:#d6dadc;"></div>
<div class="r" style="left:76px;top:602px;width:854px;height:13px;background:linear-gradient(#f1f1f1,#e9e9e9);"></div>
<div class="r" style="left:76px;top:615px;width:854px;height:1px;background:#f6f6f6;"></div>
<div class="r" style="left:813px;top:605px;width:200px;height:8px;background:#bcbcbc;border-radius:4px"></div>
<div class="r" style="left:0;top:0;width:76px;height:617px;background:linear-gradient(180deg,#394856 0px,#3b4a58 58px,#44535f 70px,#54636f 120px,#53626f 135px,#4c5c6a 175px,#4b5b69 230px,#45566a 280px,#3e4e5c 330px,#3a4a59 400px,#38485a 617px)"></div>
<svg style="left:0;top:0" width="1" height="1"><defs><linearGradient id="mf" x1="0" y1="0" x2="0" y2="1"><stop offset="0" stop-color="rgba(255,255,255,0.05)"/><stop offset="1" stop-color="rgba(255,255,255,0)"/></linearGradient></defs><path d="M0 168L24 152L36 163L62 187L62 215L0 215z" fill="url(#mf)"/><defs><linearGradient id="lz" x1="0" y1="0" x2="0" y2="1"><stop offset="0" stop-color="rgba(10,20,30,0)"/><stop offset="0.4" stop-color="rgba(10,20,30,0.07)"/><stop offset="1" stop-color="rgba(10,20,30,0)"/></linearGradient></defs><rect x="0" y="190" width="62" height="130" fill="url(#lz)"/><ellipse cx="10" cy="236" rx="6" ry="12" transform="rotate(-30 10 236)" fill="rgba(255,255,255,0.07)"/><ellipse cx="53" cy="230" rx="7" ry="5" fill="rgba(255,255,255,0.06)"/><ellipse cx="40" cy="270" rx="10" ry="4" transform="rotate(35 40 270)" fill="rgba(255,255,255,0.05)"/><rect x="19.8" y="172.6" width="2.8" height="1.5" fill="rgba(255,255,255,0.08)"/><rect x="3.5" y="226.1" width="1.7" height="1.1" fill="rgba(255,255,255,0.03)"/><rect x="25.9" y="274.0" width="3.1" height="2.4" fill="rgba(255,255,255,0.04)"/><rect x="35.2" y="209.5" width="3.6" height="1.4" fill="rgba(255,255,255,0.10)"/><rect x="8.8" y="167.7" width="2.0" height="1.9" fill="rgba(20,30,40,0.05)"/><rect x="39.0" y="205.9" width="1.6" height="1.3" fill="rgba(255,255,255,0.07)"/><rect x="41.5" y="214.1" width="2.6" height="1.4" fill="rgba(20,30,40,0.05)"/><rect x="48.5" y="254.8" width="2.8" height="2.3" fill="rgba(20,30,40,0.05)"/><rect x="44.5" y="193.2" width="2.5" height="2.1" fill="rgba(255,255,255,0.10)"/><rect x="9.3" y="223.3" width="3.4" height="1.9" fill="rgba(20,30,40,0.03)"/><rect x="53.4" y="197.1" width="2.9" height="1.7" fill="rgba(20,30,40,0.08)"/><rect x="51.2" y="291.7" width="1.7" height="2.1" fill="rgba(20,30,40,0.06)"/><rect x="39.5" y="299.0" width="2.5" height="2.0" fill="rgba(255,255,255,0.09)"/><rect x="1.4" y="219.3" width="1.6" height="2.2" fill="rgba(255,255,255,0.04)"/><rect x="7.9" y="187.1" width="1.7" height="1.7" fill="rgba(20,30,40,0.06)"/><rect x="33.5" y="282.5" width="2.2" height="1.6" fill="rgba(20,30,40,0.09)"/><rect x="21.9" y="282.6" width="1.9" height="1.3" fill="rgba(255,255,255,0.10)"/><rect x="14.2" y="222.7" width="1.5" height="1.6" fill="rgba(255,255,255,0.07)"/><rect x="22.5" y="235.0" width="2.8" height="1.9" fill="rgba(20,30,40,0.10)"/><rect x="54.9" y="267.0" width="2.5" height="1.6" fill="rgba(20,30,40,0.09)"/><rect x="6.3" y="245.1" width="2.0" height="1.2" fill="rgba(255,255,255,0.03)"/><rect x="20.7" y="157.9" width="1.8" height="1.5" fill="rgba(255,255,255,0.03)"/><rect x="1.6" y="281.1" width="2.1" height="1.5" fill="rgba(255,255,255,0.07)"/><rect x="22.2" y="168.4" width="2.7" height="1.7" fill="rgba(20,30,40,0.09)"/><rect x="5.2" y="165.3" width="3.6" height="1.2" fill="rgba(255,255,255,0.05)"/><rect x="1.4" y="292.6" width="2.9" height="1.0" fill="rgba(255,255,255,0.07)"/><rect x="32.2" y="296.8" width="2.2" height="1.6" fill="rgba(20,30,40,0.09)"/><rect x="10.2" y="265.8" width="2.3" height="1.3" fill="rgba(20,30,40,0.07)"/><rect x="49.5" y="297.7" width="3.5" height="2.1" fill="rgba(20,30,40,0.09)"/><rect x="13.8" y="227.6" width="1.6" height="1.4" fill="rgba(255,255,255,0.05)"/><rect x="15.8" y="253.9" width="3.8" height="2.5" fill="rgba(255,255,255,0.10)"/><rect x="58.3" y="204.7" width="2.0" height="1.3" fill="rgba(255,255,255,0.05)"/><rect x="38.1" y="285.0" width="3.1" height="2.2" fill="rgba(255,255,255,0.09)"/><rect x="5.2" y="249.1" width="3.4" height="1.7" fill="rgba(20,30,40,0.09)"/><rect x="10.9" y="268.4" width="3.9" height="1.6" fill="rgba(20,30,40,0.05)"/><rect x="24.5" y="292.0" width="1.8" height="1.2" fill="rgba(255,255,255,0.08)"/><rect x="55.2" y="271.0" width="4.0" height="2.0" fill="rgba(20,30,40,0.04)"/><rect x="21.4" y="232.3" width="3.9" height="2.0" fill="rgba(255,255,255,0.04)"/><rect x="32.1" y="290.0" width="3.6" height="1.3" fill="rgba(20,30,40,0.06)"/><rect x="15.4" y="193.9" width="2.1" height="1.6" fill="rgba(20,30,40,0.05)"/><rect x="8.0" y="286.5" width="3.0" height="2.4" fill="rgba(255,255,255,0.05)"/><rect x="25.7" y="287.7" width="2.8" height="1.0" fill="rgba(255,255,255,0.07)"/><rect x="26.8" y="177.5" width="1.9" height="1.7" fill="rgba(20,30,40,0.03)"/><rect x="44.2" y="233.5" width="2.9" height="2.2" fill="rgba(255,255,255,0.05)"/><rect x="6.5" y="234.0" width="3.4" height="1.8" fill="rgba(255,255,255,0.05)"/><rect x="34.3" y="264.0" width="3.0" height="1.8" fill="rgba(255,255,255,0.09)"/><rect x="31.2" y="253.9" width="2.7" height="2.4" fill="rgba(255,255,255,0.06)"/><rect x="42.7" y="281.5" width="2.9" height="2.4" fill="rgba(255,255,255,0.10)"/><rect x="7.4" y="216.3" width="1.7" height="2.0" fill="rgba(255,255,255,0.04)"/><rect x="47.8" y="284.6" width="3.2" height="1.2" fill="rgba(20,30,40,0.04)"/><rect x="53.9" y="295.1" width="2.5" height="1.7" fill="rgba(20,30,40,0.05)"/><rect x="60.4" y="274.9" width="2.8" height="1.5" fill="rgba(255,255,255,0.04)"/><rect x="11.9" y="197.8" width="2.9" height="1.7" fill="rgba(255,255,255,0.08)"/><rect x="1.1" y="199.7" width="1.7" height="2.5" fill="rgba(255,255,255,0.07)"/><rect x="48.1" y="295.8" width="1.6" height="2.2" fill="rgba(255,255,255,0.04)"/><rect x="16.5" y="169.4" width="3.5" height="1.4" fill="rgba(20,30,40,0.06)"/><rect x="9.1" y="287.9" width="1.7" height="1.1" fill="rgba(20,30,40,0.07)"/><rect x="42.0" y="213.8" width="3.1" height="2.2" fill="rgba(20,30,40,0.04)"/><rect x="5.1" y="278.4" width="2.6" height="1.5" fill="rgba(20,30,40,0.03)"/><rect x="33.7" y="289.0" width="2.8" height="1.4" fill="rgba(255,255,255,0.05)"/><rect x="6.7" y="174.2" width="2.3" height="1.5" fill="rgba(255,255,255,0.03)"/><rect x="46.3" y="193.5" width="2.4" height="1.0" fill="rgba(255,255,255,0.07)"/><rect x="44.7" y="232.7" width="3.8" height="1.2" fill="rgba(255,255,255,0.04)"/><rect x="50.0" y="214.8" width="2.5" height="1.8" fill="rgba(20,30,40,0.06)"/><rect x="42.0" y="297.4" width="3.3" height="2.0" fill="rgba(20,30,40,0.05)"/><rect x="24.7" y="202.1" width="1.7" height="2.1" fill="rgba(255,255,255,0.03)"/><rect x="15.6" y="174.5" width="3.7" height="2.0" fill="rgba(20,30,40,0.04)"/><rect x="17.2" y="186.3" width="1.9" height="1.7" fill="rgba(255,255,255,0.05)"/><rect x="16.1" y="294.3" width="2.1" height="2.4" fill="rgba(255,255,255,0.10)"/><rect x="18.9" y="203.5" width="2.7" height="1.8" fill="rgba(255,255,255,0.03)"/><rect x="12.3" y="225.7" width="1.7" height="1.6" fill="rgba(255,255,255,0.03)"/><rect x="18.6" y="184.9" width="3.4" height="2.0" fill="rgba(255,255,255,0.07)"/><rect x="43.7" y="281.9" width="4.0" height="1.2" fill="rgba(255,255,255,0.06)"/><rect x="44.2" y="246.5" width="3.7" height="1.9" fill="rgba(20,30,40,0.03)"/><rect x="44.8" y="271.8" width="2.8" height="2.3" fill="rgba(255,255,255,0.04)"/><rect x="49.1" y="274.0" width="3.2" height="2.0" fill="rgba(20,30,40,0.07)"/><rect x="8.1" y="204.1" width="2.9" height="1.9" fill="rgba(20,30,40,0.04)"/><rect x="38.2" y="252.1" width="3.5" height="2.1" fill="rgba(255,255,255,0.06)"/><rect x="30.7" y="230.3" width="3.3" height="1.4" fill="rgba(255,255,255,0.08)"/><rect x="4.5" y="189.8" width="3.3" height="2.5" fill="rgba(255,255,255,0.08)"/><rect x="30.1" y="207.4" width="3.4" height="1.9" fill="rgba(20,30,40,0.06)"/><rect x="9.0" y="188.1" width="2.9" height="1.0" fill="rgba(255,255,255,0.08)"/><rect x="3.7" y="190.3" width="3.2" height="1.4" fill="rgba(20,30,40,0.08)"/><rect x="31.5" y="219.7" width="3.7" height="1.3" fill="rgba(255,255,255,0.06)"/><rect x="59.7" y="290.4" width="3.5" height="2.5" fill="rgba(255,255,255,0.03)"/><rect x="27.4" y="190.3" width="2.0" height="1.9" fill="rgba(20,30,40,0.04)"/><rect x="8.6" y="228.6" width="3.6" height="1.8" fill="rgba(255,255,255,0.10)"/><rect x="54.1" y="255.5" width="2.7" height="1.0" fill="rgba(20,30,40,0.05)"/><rect x="0.2" y="223.8" width="1.9" height="1.5" fill="rgba(255,255,255,0.06)"/><rect x="19.3" y="276.0" width="3.6" height="1.2" fill="rgba(20,30,40,0.03)"/><rect x="56.5" y="257.0" width="2.4" height="1.6" fill="rgba(255,255,255,0.09)"/><rect x="60.9" y="238.4" width="2.2" height="1.1" fill="rgba(255,255,255,0.06)"/><rect x="6.2" y="275.2" width="2.1" height="1.4" fill="rgba(20,30,40,0.05)"/><rect x="31.2" y="178.5" width="3.7" height="2.2" fill="rgba(20,30,40,0.06)"/><rect x="38.5" y="287.0" width="3.3" height="1.1" fill="rgba(255,255,255,0.10)"/><rect x="44.7" y="217.6" width="2.2" height="1.1" fill="rgba(20,30,40,0.08)"/><rect x="28.8" y="201.5" width="3.9" height="1.4" fill="rgba(20,30,40,0.05)"/><rect x="40.0" y="195.1" width="1.9" height="1.2" fill="rgba(255,255,255,0.07)"/><rect x="12.7" y="285.9" width="3.8" height="2.5" fill="rgba(255,255,255,0.06)"/><rect x="27.4" y="170.9" width="2.4" height="1.1" fill="rgba(255,255,255,0.04)"/><rect x="14.6" y="188.8" width="3.4" height="1.6" fill="rgba(20,30,40,0.07)"/><rect x="25.2" y="228.6" width="1.7" height="1.4" fill="rgba(255,255,255,0.06)"/><rect x="30.7" y="244.4" width="2.2" height="1.4" fill="rgba(255,255,255,0.09)"/><rect x="24.4" y="216.9" width="3.7" height="1.0" fill="rgba(20,30,40,0.10)"/><rect x="2.0" y="256.4" width="3.0" height="1.0" fill="rgba(255,255,255,0.09)"/><rect x="23.9" y="289.0" width="3.9" height="1.4" fill="rgba(20,30,40,0.09)"/><rect x="6.7" y="173.2" width="3.9" height="2.1" fill="rgba(20,30,40,0.07)"/><rect x="39.5" y="264.7" width="1.6" height="2.2" fill="rgba(20,30,40,0.06)"/><rect x="14.2" y="288.0" width="1.8" height="1.4" fill="rgba(255,255,255,0.08)"/><rect x="38.8" y="254.8" width="2.8" height="1.9" fill="rgba(255,255,255,0.04)"/><rect x="23.7" y="183.5" width="2.3" height="1.7" fill="rgba(255,255,255,0.07)"/><rect x="58.5" y="246.7" width="2.1" height="1.4" fill="rgba(255,255,255,0.09)"/><rect x="58.6" y="255.7" width="2.7" height="2.0" fill="rgba(255,255,255,0.05)"/><rect x="25.6" y="188.6" width="2.1" height="1.1" fill="rgba(20,30,40,0.08)"/><rect x="20.6" y="213.1" width="3.5" height="2.1" fill="rgba(255,255,255,0.08)"/><rect x="30.8" y="180.8" width="3.6" height="1.3" fill="rgba(255,255,255,0.10)"/><rect x="13.5" y="264.1" width="2.7" height="1.3" fill="rgba(20,30,40,0.05)"/><rect x="13.6" y="212.6" width="1.9" height="1.6" fill="rgba(20,30,40,0.08)"/><rect x="13.0" y="296.1" width="1.7" height="1.6" fill="rgba(255,255,255,0.04)"/><rect x="54.8" y="282.5" width="3.8" height="1.5" fill="rgba(20,30,40,0.08)"/><rect x="11.3" y="290.4" width="3.2" height="1.6" fill="rgba(255,255,255,0.08)"/><rect x="22.8" y="199.8" width="2.2" height="1.5" fill="rgba(255,255,255,0.04)"/><rect x="21.8" y="273.2" width="1.6" height="1.7" fill="rgba(255,255,255,0.09)"/><rect x="22.7" y="287.9" width="3.7" height="1.0" fill="rgba(255,255,255,0.04)"/><rect x="25.1" y="271.8" width="1.6" height="1.1" fill="rgba(255,255,255,0.08)"/><rect x="56.1" y="188.6" width="2.3" height="1.4" fill="rgba(20,30,40,0.08)"/><rect x="58.4" y="242.5" width="2.3" height="1.4" fill="rgba(20,30,40,0.05)"/><rect x="0.2" y="263.3" width="3.9" height="1.0" fill="rgba(20,30,40,0.09)"/><rect x="14.3" y="221.3" width="2.5" height="1.4" fill="rgba(20,30,40,0.10)"/><rect x="26.2" y="224.0" width="3.5" height="2.1" fill="rgba(255,255,255,0.09)"/><rect x="50.2" y="265.9" width="2.3" height="1.5" fill="rgba(255,255,255,0.07)"/><rect x="12.0" y="262.9" width="1.6" height="1.8" fill="rgba(255,255,255,0.05)"/><rect x="19.9" y="297.0" width="2.2" height="1.1" fill="rgba(20,30,40,0.09)"/><rect x="5.9" y="224.8" width="2.1" height="1.6" fill="rgba(255,255,255,0.08)"/><rect x="37.8" y="251.1" width="3.2" height="1.2" fill="rgba(20,30,40,0.08)"/><rect x="51.3" y="194.1" width="3.3" height="1.3" fill="rgba(255,255,255,0.07)"/><rect x="15.1" y="186.8" width="2.9" height="1.5" fill="rgba(20,30,40,0.04)"/><rect x="24.2" y="298.9" width="3.5" height="2.0" fill="rgba(255,255,255,0.07)"/><rect x="29.0" y="272.9" width="1.6" height="1.4" fill="rgba(20,30,40,0.09)"/><rect x="7.3" y="178.4" width="3.8" height="1.6" fill="rgba(20,30,40,0.10)"/><rect x="52.8" y="217.4" width="3.9" height="1.2" fill="rgba(20,30,40,0.05)"/><rect x="36.4" y="243.0" width="1.9" height="1.3" fill="rgba(255,255,255,0.05)"/><rect x="15.5" y="239.9" width="1.5" height="1.5" fill="rgba(255,255,255,0.08)"/><rect x="41.4" y="177.8" width="3.5" height="1.8" fill="rgba(255,255,255,0.05)"/><rect x="24.1" y="232.5" width="1.9" height="2.0" fill="rgba(255,255,255,0.07)"/><rect x="25.0" y="192.5" width="2.3" height="1.8" fill="rgba(20,30,40,0.05)"/><rect x="21.8" y="212.5" width="2.4" height="1.3" fill="rgba(20,30,40,0.09)"/><rect x="44.4" y="180.6" width="2.6" height="2.2" fill="rgba(20,30,40,0.03)"/><rect x="24.8" y="282.4" width="1.5" height="1.8" fill="rgba(255,255,255,0.06)"/><rect x="39.1" y="286.5" width="2.4" height="1.8" fill="rgba(20,30,40,0.04)"/><rect x="8.9" y="192.5" width="1.8" height="1.7" fill="rgba(20,30,40,0.07)"/><rect x="49.1" y="295.0" width="3.9" height="2.5" fill="rgba(255,255,255,0.04)"/><rect x="29.4" y="158.0" width="3.8" height="1.9" fill="rgba(255,255,255,0.09)"/><rect x="47.9" y="183.3" width="3.6" height="1.3" fill="rgba(20,30,40,0.06)"/><rect x="13.3" y="210.0" width="1.8" height="1.4" fill="rgba(255,255,255,0.07)"/><rect x="44.2" y="284.6" width="3.4" height="1.1" fill="rgba(20,30,40,0.03)"/><rect x="36.6" y="232.5" width="2.6" height="1.9" fill="rgba(255,255,255,0.07)"/><rect x="26.0" y="248.8" width="1.6" height="1.9" fill="rgba(255,255,255,0.06)"/><rect x="29.9" y="185.3" width="2.6" height="1.3" fill="rgba(20,30,40,0.08)"/><rect x="28.9" y="166.1" width="1.7" height="1.7" fill="rgba(255,255,255,0.04)"/><rect x="44.7" y="266.6" width="2.8" height="1.6" fill="rgba(255,255,255,0.07)"/><rect x="52.3" y="299.4" width="2.0" height="2.5" fill="rgba(20,30,40,0.08)"/><rect x="30.0" y="293.5" width="3.5" height="2.4" fill="rgba(255,255,255,0.09)"/><rect x="4.0" y="202.6" width="3.7" height="1.4" fill="rgba(255,255,255,0.08)"/><rect x="30.6" y="288.0" width="2.8" height="1.5" fill="rgba(255,255,255,0.04)"/><rect x="2.2" y="177.3" width="3.2" height="2.3" fill="rgba(20,30,40,0.04)"/><rect x="10.3" y="267.7" width="3.1" height="1.5" fill="rgba(255,255,255,0.04)"/><rect x="53.3" y="233.3" width="1.8" height="2.5" fill="rgba(20,30,40,0.07)"/><rect x="38.4" y="209.1" width="4.0" height="1.9" fill="rgba(255,255,255,0.09)"/><rect x="22.0" y="264.7" width="3.4" height="1.1" fill="rgba(255,255,255,0.06)"/><rect x="50.0" y="188.0" width="3.0" height="2.0" fill="rgba(20,30,40,0.07)"/><rect x="2.1" y="172.4" width="2.8" height="2.3" fill="rgba(255,255,255,0.07)"/><rect x="8.1" y="184.1" width="1.5" height="1.5" fill="rgba(255,255,255,0.08)"/><rect x="6.5" y="203.6" width="3.0" height="1.3" fill="rgba(20,30,40,0.05)"/><rect x="38.1" y="221.2" width="2.1" height="1.2" fill="rgba(20,30,40,0.04)"/><rect x="5.8" y="245.7" width="2.5" height="1.4" fill="rgba(20,30,40,0.09)"/><rect x="0.7" y="246.7" width="3.1" height="1.7" fill="rgba(255,255,255,0.07)"/><rect x="57.2" y="260.0" width="1.6" height="1.8" fill="rgba(20,30,40,0.05)"/><rect x="24.8" y="185.7" width="1.5" height="1.8" fill="rgba(20,30,40,0.03)"/><rect x="12.2" y="241.2" width="3.5" height="1.3" fill="rgba(20,30,40,0.07)"/><rect x="18.9" y="195.0" width="3.5" height="2.1" fill="rgba(20,30,40,0.03)"/><rect x="0.4" y="276.7" width="3.4" height="1.7" fill="rgba(255,255,255,0.08)"/><rect x="13.8" y="165.8" width="2.3" height="2.1" fill="rgba(255,255,255,0.05)"/><rect x="42.4" y="276.8" width="2.9" height="1.7" fill="rgba(255,255,255,0.08)"/><rect x="48.1" y="228.5" width="3.9" height="1.3" fill="rgba(20,30,40,0.05)"/><rect x="15.9" y="185.4" width="3.4" height="1.5" fill="rgba(20,30,40,0.08)"/><rect x="53.7" y="199.3" width="3.1" height="2.0" fill="rgba(20,30,40,0.05)"/><rect x="40.6" y="296.9" width="3.2" height="2.3" fill="rgba(20,30,40,0.06)"/><rect x="26.7" y="258.7" width="2.0" height="1.9" fill="rgba(255,255,255,0.07)"/><rect x="4.7" y="286.6" width="1.8" height="2.4" fill="rgba(255,255,255,0.04)"/><rect x="21.0" y="171.3" width="3.2" height="2.0" fill="rgba(255,255,255,0.03)"/><rect x="42.5" y="260.5" width="2.4" height="2.2" fill="rgba(20,30,40,0.03)"/><rect x="50.0" y="283.7" width="3.8" height="2.4" fill="rgba(20,30,40,0.03)"/><rect x="6.5" y="180.9" width="3.6" height="2.2" fill="rgba(255,255,255,0.04)"/><rect x="38.7" y="273.8" width="1.7" height="1.1" fill="rgba(255,255,255,0.07)"/><rect x="46.2" y="180.7" width="1.6" height="1.4" fill="rgba(255,255,255,0.05)"/><rect x="17.2" y="257.4" width="3.9" height="1.8" fill="rgba(255,255,255,0.06)"/><rect x="51.9" y="242.7" width="2.6" height="2.2" fill="rgba(255,255,255,0.03)"/><rect x="21.2" y="255.7" width="3.7" height="1.1" fill="rgba(255,255,255,0.07)"/><rect x="0.1" y="180.3" width="1.5" height="1.7" fill="rgba(20,30,40,0.08)"/><rect x="30.0" y="269.5" width="2.4" height="2.2" fill="rgba(255,255,255,0.04)"/><rect x="15.9" y="291.6" width="3.2" height="1.7" fill="rgba(255,255,255,0.05)"/><rect x="6.7" y="245.5" width="3.2" height="2.2" fill="rgba(20,30,40,0.04)"/><rect x="38.3" y="203.3" width="3.7" height="1.1" fill="rgba(255,255,255,0.06)"/><rect x="12.6" y="189.5" width="2.4" height="2.3" fill="rgba(255,255,255,0.09)"/><rect x="14.2" y="219.1" width="3.4" height="2.0" fill="rgba(20,30,40,0.07)"/><rect x="21.3" y="199.0" width="3.2" height="2.1" fill="rgba(20,30,40,0.04)"/><rect x="10.3" y="215.8" width="1.8" height="1.7" fill="rgba(20,30,40,0.08)"/><rect x="54.0" y="185.7" width="3.3" height="2.3" fill="rgba(255,255,255,0.04)"/><rect x="9.4" y="173.4" width="2.8" height="1.2" fill="rgba(255,255,255,0.05)"/><rect x="20.0" y="178.4" width="1.8" height="2.4" fill="rgba(20,30,40,0.10)"/><rect x="6.2" y="207.6" width="3.3" height="1.7" fill="rgba(20,30,40,0.10)"/><rect x="12.0" y="245.7" width="2.5" height="1.1" fill="rgba(255,255,255,0.04)"/><rect x="24.3" y="268.7" width="3.1" height="1.7" fill="rgba(255,255,255,0.08)"/><rect x="8.7" y="240.6" width="3.8" height="1.6" fill="rgba(20,30,40,0.06)"/><rect x="35.0" y="262.4" width="3.3" height="2.3" fill="rgba(255,255,255,0.06)"/><rect x="47.2" y="255.0" width="3.1" height="1.7" fill="rgba(20,30,40,0.09)"/><rect x="19.1" y="244.2" width="3.5" height="2.1" fill="rgba(255,255,255,0.04)"/><rect x="38.4" y="187.5" width="3.1" height="1.6" fill="rgba(255,255,255,0.06)"/><rect x="41.2" y="289.5" width="3.4" height="1.6" fill="rgba(20,30,40,0.04)"/><rect x="29.9" y="296.2" width="1.9" height="2.2" fill="rgba(255,255,255,0.03)"/><rect x="57.4" y="227.9" width="2.9" height="2.1" fill="rgba(20,30,40,0.04)"/><rect x="31.2" y="245.9" width="2.5" height="2.4" fill="rgba(255,255,255,0.09)"/><rect x="12.8" y="252.7" width="1.8" height="2.5" fill="rgba(20,30,40,0.06)"/><rect x="21.7" y="158.5" width="1.5" height="1.6" fill="rgba(255,255,255,0.05)"/><rect x="25.7" y="254.7" width="2.1" height="2.1" fill="rgba(255,255,255,0.05)"/><rect x="57.3" y="229.1" width="2.5" height="1.3" fill="rgba(20,30,40,0.05)"/><rect x="7.9" y="266.5" width="2.7" height="1.8" fill="rgba(20,30,40,0.09)"/><rect x="13.8" y="294.6" width="3.5" height="2.2" fill="rgba(20,30,40,0.05)"/><rect x="28.6" y="194.2" width="3.6" height="1.5" fill="rgba(255,255,255,0.07)"/><rect x="51.9" y="190.1" width="2.6" height="1.3" fill="rgba(255,255,255,0.06)"/><rect x="0.2" y="258.3" width="2.3" height="1.7" fill="rgba(255,255,255,0.05)"/><rect x="26.1" y="245.6" width="3.8" height="2.3" fill="rgba(255,255,255,0.08)"/><rect x="3.5" y="274.2" width="1.9" height="2.2" fill="rgba(20,30,40,0.09)"/><rect x="0.7" y="292.8" width="1.8" height="1.2" fill="rgba(255,255,255,0.08)"/><rect x="14.3" y="266.4" width="3.8" height="2.2" fill="rgba(255,255,255,0.05)"/><rect x="10.2" y="283.7" width="3.2" height="2.3" fill="rgba(20,30,40,0.07)"/><rect x="48.1" y="275.8" width="2.8" height="2.1" fill="rgba(20,30,40,0.04)"/><rect x="26.8" y="282.4" width="2.1" height="1.2" fill="rgba(255,255,255,0.07)"/><rect x="30.1" y="158.8" width="2.7" height="1.7" fill="rgba(255,255,255,0.06)"/><rect x="32.9" y="279.4" width="2.7" height="1.8" fill="rgba(20,30,40,0.03)"/><rect x="40.6" y="276.1" width="3.9" height="1.1" fill="rgba(255,255,255,0.06)"/><rect x="38.9" y="245.4" width="3.2" height="2.4" fill="rgba(20,30,40,0.03)"/><rect x="20.2" y="297.3" width="3.7" height="1.1" fill="rgba(255,255,255,0.07)"/><rect x="43.8" y="243.8" width="2.4" height="1.7" fill="rgba(20,30,40,0.05)"/><rect x="32.1" y="265.6" width="2.6" height="1.8" fill="rgba(255,255,255,0.04)"/><rect x="50.4" y="193.9" width="2.8" height="1.4" fill="rgba(255,255,255,0.09)"/><rect x="30.9" y="296.2" width="2.3" height="1.5" fill="rgba(20,30,40,0.08)"/><rect x="18.3" y="238.0" width="1.6" height="2.1" fill="rgba(20,30,40,0.07)"/><rect x="54.0" y="231.8" width="1.5" height="1.3" fill="rgba(255,255,255,0.03)"/><rect x="56.2" y="241.3" width="3.8" height="1.9" fill="rgba(20,30,40,0.08)"/><rect x="37.6" y="244.0" width="3.2" height="1.3" fill="rgba(20,30,40,0.08)"/><rect x="40.7" y="218.7" width="2.0" height="1.1" fill="rgba(255,255,255,0.08)"/><rect x="47.2" y="287.1" width="3.6" height="2.2" fill="rgba(255,255,255,0.08)"/><rect x="34.3" y="188.7" width="2.3" height="1.6" fill="rgba(255,255,255,0.05)"/><rect x="39.1" y="290.1" width="1.6" height="1.2" fill="rgba(20,30,40,0.03)"/><rect x="49.4" y="236.3" width="1.5" height="1.6" fill="rgba(255,255,255,0.09)"/><rect x="36.1" y="290.7" width="2.5" height="1.2" fill="rgba(255,255,255,0.10)"/><rect x="39.3" y="181.8" width="1.5" height="2.0" fill="rgba(255,255,255,0.04)"/><rect x="7.4" y="295.0" width="1.8" height="1.0" fill="rgba(20,30,40,0.04)"/><rect x="43.9" y="186.3" width="1.6" height="2.2" fill="rgba(255,255,255,0.08)"/><rect x="43.5" y="278.3" width="3.1" height="2.1" fill="rgba(255,255,255,0.08)"/><rect x="28.1" y="289.9" width="3.3" height="1.0" fill="rgba(20,30,40,0.05)"/><rect x="0.9" y="247.6" width="2.3" height="2.1" fill="rgba(255,255,255,0.09)"/><rect x="10.1" y="279.1" width="2.4" height="1.9" fill="rgba(255,255,255,0.06)"/><rect x="26.8" y="251.5" width="2.4" height="2.0" fill="rgba(20,30,40,0.04)"/><rect x="38.4" y="212.7" width="3.9" height="2.2" fill="rgba(20,30,40,0.06)"/><rect x="34.6" y="193.9" width="3.3" height="2.2" fill="rgba(20,30,40,0.03)"/><rect x="20.3" y="240.9" width="3.0" height="1.5" fill="rgba(20,30,40,0.10)"/><rect x="26.1" y="283.2" width="3.0" height="2.3" fill="rgba(20,30,40,0.06)"/><rect x="49.3" y="192.5" width="2.6" height="1.9" fill="rgba(255,255,255,0.03)"/><rect x="49.8" y="283.1" width="3.5" height="2.3" fill="rgba(20,30,40,0.03)"/><rect x="34.9" y="191.1" width="3.2" height="2.4" fill="rgba(20,30,40,0.09)"/><rect x="21.2" y="162.8" width="2.0" height="2.1" fill="rgba(20,30,40,0.07)"/><rect x="56.8" y="185.1" width="2.7" height="1.3" fill="rgba(20,30,40,0.07)"/><rect x="15.5" y="262.7" width="1.7" height="2.2" fill="rgba(255,255,255,0.09)"/><rect x="47.1" y="184.9" width="3.7" height="1.8" fill="rgba(20,30,40,0.07)"/><rect x="29.1" y="238.4" width="2.0" height="2.1" fill="rgba(255,255,255,0.04)"/><rect x="22.1" y="234.7" width="1.9" height="1.1" fill="rgba(255,255,255,0.06)"/><rect x="60.8" y="206.1" width="3.5" height="1.2" fill="rgba(20,30,40,0.04)"/><rect x="36.4" y="201.7" width="1.6" height="2.5" fill="rgba(255,255,255,0.07)"/><rect x="52.8" y="222.9" width="3.4" height="1.6" fill="rgba(255,255,255,0.07)"/><rect x="57.7" y="265.1" width="2.1" height="1.1" fill="rgba(20,30,40,0.09)"/><rect x="12.3" y="177.1" width="2.9" height="2.3" fill="rgba(255,255,255,0.04)"/><rect x="28.0" y="292.1" width="3.0" height="1.6" fill="rgba(255,255,255,0.09)"/><rect x="7.3" y="293.9" width="3.1" height="2.4" fill="rgba(20,30,40,0.05)"/><rect x="40.9" y="209.0" width="3.9" height="2.5" fill="rgba(255,255,255,0.06)"/><rect x="15.6" y="202.8" width="3.6" height="1.1" fill="rgba(20,30,40,0.09)"/><rect x="48.0" y="256.4" width="1.6" height="1.2" fill="rgba(20,30,40,0.08)"/><rect x="46.1" y="290.9" width="3.0" height="2.1" fill="rgba(255,255,255,0.08)"/><rect x="6.4" y="198.6" width="2.7" height="1.3" fill="rgba(255,255,255,0.05)"/><rect x="14.5" y="171.5" width="3.3" height="1.3" fill="rgba(255,255,255,0.08)"/><rect x="2.2" y="289.2" width="3.7" height="2.3" fill="rgba(20,30,40,0.05)"/><rect x="8.5" y="217.1" width="3.6" height="1.9" fill="rgba(20,30,40,0.04)"/><rect x="27.6" y="201.0" width="3.1" height="1.2" fill="rgba(255,255,255,0.09)"/><rect x="43.5" y="233.0" width="2.2" height="1.6" fill="rgba(20,30,40,0.04)"/><rect x="9.5" y="190.7" width="1.9" height="1.7" fill="rgba(255,255,255,0.09)"/><rect x="19.4" y="285.5" width="1.6" height="2.3" fill="rgba(20,30,40,0.04)"/><rect x="40.8" y="181.7" width="2.1" height="1.3" fill="rgba(255,255,255,0.06)"/><rect x="22.2" y="298.7" width="1.7" height="1.4" fill="rgba(20,30,40,0.10)"/><rect x="44.3" y="194.0" width="3.5" height="1.5" fill="rgba(255,255,255,0.10)"/><rect x="50.8" y="229.0" width="3.8" height="1.3" fill="rgba(255,255,255,0.04)"/><rect x="34.9" y="170.7" width="3.3" height="1.3" fill="rgba(20,30,40,0.04)"/><rect x="37.1" y="224.3" width="3.0" height="2.1" fill="rgba(255,255,255,0.05)"/><rect x="49.5" y="237.4" width="3.3" height="1.6" fill="rgba(255,255,255,0.04)"/><rect x="49.4" y="200.3" width="2.7" height="1.0" fill="rgba(20,30,40,0.09)"/><rect x="55.5" y="221.5" width="2.0" height="2.2" fill="rgba(255,255,255,0.09)"/><rect x="22.4" y="174.5" width="1.5" height="1.8" fill="rgba(20,30,40,0.06)"/><rect x="27.2" y="227.3" width="3.5" height="2.3" fill="rgba(20,30,40,0.04)"/><rect x="19.6" y="256.7" width="1.7" height="2.3" fill="rgba(20,30,40,0.06)"/><rect x="58.2" y="224.2" width="2.8" height="1.0" fill="rgba(255,255,255,0.07)"/><rect x="11.1" y="165.4" width="1.6" height="1.1" fill="rgba(20,30,40,0.05)"/><rect x="42.6" y="179.3" width="2.9" height="1.8" fill="rgba(20,30,40,0.03)"/><rect x="53.0" y="257.6" width="2.7" height="1.8" fill="rgba(255,255,255,0.03)"/><rect x="17.1" y="168.3" width="3.0" height="2.3" fill="rgba(255,255,255,0.06)"/><rect x="9.0" y="235.9" width="3.6" height="2.4" fill="rgba(255,255,255,0.08)"/><rect x="23.7" y="213.1" width="2.5" height="2.4" fill="rgba(255,255,255,0.09)"/><rect x="47.4" y="200.8" width="2.6" height="2.5" fill="rgba(255,255,255,0.05)"/><rect x="49.1" y="286.9" width="1.6" height="1.8" fill="rgba(20,30,40,0.09)"/><rect x="58.4" y="290.1" width="3.1" height="1.5" fill="rgba(255,255,255,0.05)"/><rect x="32.4" y="160.4" width="1.6" height="1.2" fill="rgba(255,255,255,0.06)"/><rect x="59.2" y="266.5" width="3.5" height="2.3" fill="rgba(20,30,40,0.10)"/><rect x="39.1" y="189.9" width="2.9" height="2.4" fill="rgba(255,255,255,0.08)"/><rect x="37.9" y="187.6" width="3.9" height="1.4" fill="rgba(255,255,255,0.07)"/><rect x="18.6" y="247.1" width="3.9" height="1.8" fill="rgba(20,30,40,0.04)"/><rect x="16.4" y="220.0" width="1.8" height="1.2" fill="rgba(255,255,255,0.07)"/><rect x="17.9" y="211.0" width="1.7" height="1.8" fill="rgba(255,255,255,0.05)"/><rect x="51.2" y="241.5" width="2.0" height="2.1" fill="rgba(20,30,40,0.07)"/><rect x="28.1" y="232.2" width="2.3" height="1.4" fill="rgba(255,255,255,0.07)"/><rect x="13.5" y="226.9" width="1.5" height="1.5" fill="rgba(20,30,40,0.06)"/><rect x="52.6" y="185.8" width="2.2" height="2.5" fill="rgba(255,255,255,0.07)"/><rect x="18.0" y="265.8" width="3.7" height="1.7" fill="rgba(255,255,255,0.04)"/><rect x="3.8" y="208.2" width="1.8" height="1.3" fill="rgba(20,30,40,0.06)"/><rect x="58.5" y="260.8" width="2.4" height="2.0" fill="rgba(255,255,255,0.04)"/><rect x="37.6" y="277.5" width="3.3" height="2.1" fill="rgba(255,255,255,0.09)"/><rect x="46.3" y="221.3" width="3.8" height="1.2" fill="rgba(20,30,40,0.08)"/><rect x="46.7" y="237.9" width="2.9" height="1.6" fill="rgba(20,30,40,0.06)"/><rect x="47.8" y="280.9" width="2.6" height="1.7" fill="rgba(255,255,255,0.07)"/><rect x="44.1" y="193.9" width="2.5" height="1.5" fill="rgba(20,30,40,0.06)"/><rect x="48.0" y="277.4" width="2.0" height="1.5" fill="rgba(255,255,255,0.06)"/><rect x="8.8" y="236.3" width="3.8" height="1.5" fill="rgba(255,255,255,0.07)"/><rect x="51.4" y="275.7" width="2.6" height="2.4" fill="rgba(255,255,255,0.10)"/><rect x="34.5" y="224.6" width="2.8" height="2.5" fill="rgba(20,30,40,0.09)"/><rect x="31.6" y="227.6" width="2.4" height="1.9" fill="rgba(255,255,255,0.08)"/><rect x="21.4" y="292.2" width="1.7" height="1.6" fill="rgba(255,255,255,0.08)"/><rect x="24.5" y="234.2" width="3.9" height="1.7" fill="rgba(20,30,40,0.07)"/><rect x="26.8" y="243.7" width="2.8" height="2.2" fill="rgba(255,255,255,0.10)"/><rect x="10.4" y="197.7" width="2.8" height="1.2" fill="rgba(20,30,40,0.10)"/><rect x="54.6" y="253.5" width="3.7" height="1.6" fill="rgba(20,30,40,0.09)"/><rect x="9.5" y="193.5" width="2.0" height="1.3" fill="rgba(255,255,255,0.07)"/><rect x="38.4" y="240.5" width="3.1" height="1.1" fill="rgba(20,30,40,0.05)"/><rect x="25.1" y="268.1" width="1.5" height="1.5" fill="rgba(20,30,40,0.05)"/><rect x="51.4" y="237.9" width="2.7" height="1.8" fill="rgba(255,255,255,0.08)"/><rect x="16.2" y="247.0" width="2.9" height="1.6" fill="rgba(20,30,40,0.07)"/><rect x="7.4" y="173.5" width="1.8" height="1.3" fill="rgba(255,255,255,0.08)"/><rect x="31.9" y="273.5" width="1.7" height="1.0" fill="rgba(20,30,40,0.07)"/><rect x="47.0" y="198.4" width="1.9" height="1.4" fill="rgba(255,255,255,0.08)"/><rect x="6.1" y="285.6" width="2.6" height="1.6" fill="rgba(255,255,255,0.07)"/><rect x="3.3" y="283.6" width="2.6" height="1.9" fill="rgba(20,30,40,0.07)"/><rect x="56.8" y="278.2" width="3.5" height="1.5" fill="rgba(20,30,40,0.05)"/><rect x="36.8" y="294.0" width="2.1" height="1.6" fill="rgba(20,30,40,0.06)"/><rect x="43.8" y="183.2" width="2.7" height="2.2" fill="rgba(20,30,40,0.05)"/><rect x="14.8" y="176.0" width="3.9" height="1.4" fill="rgba(255,255,255,0.06)"/><rect x="34.3" y="167.2" width="2.5" height="1.1" fill="rgba(255,255,255,0.07)"/><rect x="7.5" y="273.9" width="2.0" height="1.4" fill="rgba(255,255,255,0.05)"/><rect x="40.5" y="201.2" width="1.7" height="1.4" fill="rgba(20,30,40,0.04)"/><rect x="27.0" y="275.4" width="2.4" height="2.1" fill="rgba(255,255,255,0.09)"/><rect x="23.0" y="293.8" width="2.8" height="1.3" fill="rgba(20,30,40,0.04)"/><rect x="27.6" y="169.6" width="3.7" height="1.9" fill="rgba(255,255,255,0.08)"/><rect x="22.4" y="186.9" width="3.7" height="1.2" fill="rgba(255,255,255,0.07)"/><rect x="31.3" y="231.4" width="2.5" height="2.0" fill="rgba(20,30,40,0.05)"/><rect x="34.6" y="196.6" width="1.9" height="2.3" fill="rgba(255,255,255,0.06)"/><rect x="19.6" y="249.4" width="2.4" height="1.8" fill="rgba(20,30,40,0.04)"/><rect x="18.1" y="159.9" width="1.8" height="2.1" fill="rgba(255,255,255,0.05)"/><rect x="17.2" y="210.5" width="3.7" height="2.3" fill="rgba(20,30,40,0.09)"/><rect x="8.1" y="191.5" width="3.2" height="1.5" fill="rgba(20,30,40,0.03)"/><rect x="25.2" y="248.9" width="3.6" height="1.5" fill="rgba(255,255,255,0.08)"/><rect x="38.4" y="177.2" width="3.3" height="2.1" fill="rgba(20,30,40,0.04)"/><rect x="9.9" y="179.7" width="1.6" height="1.5" fill="rgba(255,255,255,0.05)"/><rect x="38.9" y="177.0" width="3.3" height="1.4" fill="rgba(20,30,40,0.09)"/></svg>
<div class="r" style="left:0px;top:1px;width:1px;height:614px;background:linear-gradient(180deg,#5b7f9c 0px,#7d97aa 250px,#4a78b0 305px,#4a78b0 312px,#2a3038 320px,#33404a 500px,#4a7390 617px);"></div>
<svg style="left:0;top:0" width="1" height="1"><path d="M22.6 25.5C21.8 19.5 26 17.2 31 16.6C38 15.8 46 15.6 51 16C55 16.5 56.2 19 56.2 23C56.3 30 56.3 37 56 41.5C55.6 45 53.5 46.2 49 46C42 45.7 35 45.6 29 45.2C25 44.9 22.6 43 22.3 38.5C22 34 22.9 29 22.6 25.5z" fill="#fff"/><path d="M32.4 32.5C30.7 28.4 33.4 22.3 36.8 20.9C38.8 20.2 37.5 25 36.1 29.1L33.4 40.6M35.4 33.8C38.2 27.7 42.2 23.6 45 25C46.3 26.4 45 31.8 44.3 35.9C43.6 39.3 45.6 40 48 39.3" fill="none" stroke="#3c4b59" stroke-width="1.8" stroke-linecap="round" stroke-linejoin="round"/></svg>
<div class="r" style="left:16px;top:71px;width:45px;height:45px;border-radius:50%;background:#56cb8c"></div>
<div class="t" style="top:84.15px;font-size:14px;line-height:20px;color:#fff;left:-111.5px;width:300px;text-align:center;">AR</div>
<svg style="left:0;top:0" width="1" height="1"><path d="M41.4 143.2V161.2L27.8 152.2z" fill="#fff"/></svg>
<div class="r" style="left:7px;top:180px;width:48px;height:1px;background:rgba(255,255,255,0.08);"></div>
<svg style="left:0;top:0" width="1" height="1" fill="none" stroke="#fff" stroke-width="1.5"><path d="M28 198h11.5l2.8 2.8v15.6h-14.3z"/><path d="M39.3 198v3.1h3" stroke-width="1"/><path d="M30.6 203.3h9v9.2h-9zM30.6 205.6h9M30.6 208h9M30.6 210.3h9M33.6 203.3v9.2M36.6 203.3v9.2" stroke-width="1"/></svg>
<svg style="left:0;top:0" width="1" height="1" fill="none" stroke="#fff" stroke-width="1.5"><path d="M39.6 245.3v-1.1l-2.4-2.4h-11.2v19h13.5"/><path d="M28.6 248.6h5.4M28.6 251.5h5.4M28.6 254h5.4" stroke-width="1"/><ellipse cx="39.2" cy="250.3" rx="2.5" ry="2.9" fill="#fff" stroke="none"/><path d="M33.2 257.8c0.8-1.8 3.2-2.8 6-2.8s5.2 1 6 2.8z" fill="#fff" stroke="none"/></svg>
<svg style="left:0;top:0" width="1" height="1" fill="none" stroke="#fff" stroke-width="1.8"><rect x="26.9" y="287.1" width="16.3" height="11.8"/><path d="M32.5 285v2M37.5 285v2" stroke-width="1.2"/><path d="M29.5 293.8l3.3-3.1 3.6 5.7 4.2-5.5" stroke-width="1"/><path d="M31.8 301l-0.7 4.9M37.8 301l0.7 4.9"/></svg>
<svg style="left:0;top:0" width="1" height="1" fill="none" stroke="#fff" stroke-width="1.5"><path d="M31.3 346h-2.6v-16.1h10.5l2.2 2.2v13.9h-5"/><path d="M31.4 334.8h7.4M35.8 337.5h3" stroke-width="1"/><circle cx="33.4" cy="342" r="2.1" stroke-width="1.4"/><path d="M32 344.5v4.8l1.4-1.3 1.4 1.3v-4.8" fill="#fff" stroke-width="1"/></svg>
<div class="r" style="left:7px;top:362px;width:48px;height:44px;background:rgba(255,255,255,0.25);border-radius:4px"></div>
<svg style="left:0;top:0" width="1" height="1" fill="none" stroke="#fff" stroke-width="1.5"><path d="M30.7 375.5h-2.6v17.8h14v-17.8h-2.6"/><path d="M31.5 377.6h7.2v-1.8c0-0.8-1.2-1-2.1-1.1-0.2-0.9-0.7-1.6-1.5-1.6s-1.3 0.7-1.5 1.6c-0.9 0.1-2.1 0.3-2.1 1.1z" stroke-width="1.2"/><path d="M31.8 385.8l2.2 2.2 4-5" stroke-width="1.6"/></svg>
<svg style="left:0;top:0" width="1" height="1" fill="#fff" stroke="#fff" stroke-width="1"><path d="M24.6 421.4h20.4M24.6 427.5h20.4M24.6 433.4h20.4"/><circle cx="27" cy="421.4" r="1.5"/><circle cx="30.6" cy="421.4" r="1.5"/><circle cx="34" cy="421.4" r="1.5"/><circle cx="27" cy="427.5" r="1.5"/><circle cx="35.6" cy="427.5" r="1.5"/><circle cx="39.2" cy="427.5" r="1.5"/><circle cx="35.6" cy="433.4" r="1.5"/><circle cx="39.2" cy="433.4" r="1.5"/><circle cx="42.6" cy="433.4" r="1.5"/></svg>
<svg style="left:0;top:0" width="1" height="1" fill="none" stroke="#fff" stroke-width="1.5"><path d="M27.7 461.9h11.1l3.2 3.2v15.9h-14.3z"/><path d="M30.3 466.3h3.7M30.3 468.6h3.7M30.3 470.6h3.7M30.3 473.3h9M30.3 475.5h9M30.3 478h9" stroke-width="0.9"/><path d="M38.3 467.4c-1.2-0.6-2.3 0-1.6 1.2l1.1 1.3c0.6 1.1-0.5 1.8-1.6 1.1M37.3 466.5v5.6" stroke-width="0.8"/></svg>
<div class="r" style="left:7px;top:499px;width:48px;height:1px;background:rgba(255,255,255,0.12);"></div>
<svg style="left:0;top:0" width="1" height="1" fill="none" stroke="#fff" stroke-width="1.4"><path d="M29.9 517.7v-0.7h11.3l2.2 2.2v14.1h-1.3"/><path d="M26.9 520h10.8l2.6 2.6v13.5h-13.4z"/><path d="M29.4 525.3h2.6M29.4 527.6h7.6M29.4 530.3h7.6M29.4 532.5h7.6" stroke-width="0.9"/></svg>
<svg style="left:0;top:0" width="1" height="1" fill="none" stroke="#fff" stroke-width="1.2"><path d="M26.2 579.9l1.6-4.6 14.6-14.4 2.9 2.9-14.4 14.6z"/><path d="M28.8 576.5l14.8-14.5" stroke-width="0.7" stroke-dasharray="0.8 0.6"/><path d="M28.6 580.3h13.4" stroke-width="1.6"/></svg>
<div class="r" style="left:7px;top:598px;width:48px;height:1px;background:rgba(255,255,255,0.12);"></div>
<div class="r" style="left:31px;top:613px;width:15px;height:2px;background:#fff;"></div>
<div class="r" style="left:61px;top:131px;width:15px;height:484px;background:#f7f7f7;"></div>
<div class="r" style="left:61px;top:131px;width:1px;height:484px;background:#fdfdfd;"></div>
<div class="r" style="left:75px;top:131px;width:1px;height:484px;background:#ececec;"></div>
<div class="r" style="left:65px;top:134px;width:8px;height:416px;background:#c1c1c1;border-radius:4px"></div>
<div class="r" style="left:0px;top:616px;width:1280px;height:1px;background:#111;"></div>
<div class="r" style="left:931px;top:61px;width:349px;height:554px;background:#fff;box-shadow:-1px 0 6px rgba(0,0,0,0.10)"></div>
<div class="r" style="left:931px;top:61px;width:349px;height:50px;background:#eff4f4;"></div>
<svg style="left:0;top:0" width="1" height="1"><path d="M977.6 87.2A5.3 5.3 0 1 0 978.1 93.4" fill="none" stroke="#959595" stroke-width="1.5"/><path d="M976 93.6l2.6-4.6 2.8 3.4z" fill="#959595"/></svg>
<div class="t" style="top:80.89px;font-size:11px;line-height:20px;color:#9a9a9a;letter-spacing:0.17px;left:1002.4px;">Alle als gelesen markieren</div>
<div class="t" style="top:80.89px;font-size:11px;line-height:20px;color:#9a9a9a;letter-spacing:0.25px;left:1157.8px;">Alle löschen</div>
<div class="r" style="left:961px;top:136px;width:24px;height:24px;border-radius:50%;background:#f5a18b"></div>
<div class="t" style="top:138.68px;font-size:9px;line-height:20px;color:#fff;left:823px;width:300px;text-align:center;">D</div>
<div class="t" style="top:131.84px;font-size:12px;line-height:20px;color:#333;letter-spacing:0.22px;left:1001px;">Auftragnehmer reicht Leistungen ein</div>
<div class="t" style="top:149.84px;font-size:12px;line-height:20px;color:#777;letter-spacing:0.12px;left:1001px;">Es liegen Daten zur Prüfung vor.</div>
<div class="t" style="top:167.84px;font-size:12px;line-height:20px;color:#333;letter-spacing:0.22px;left:1001px;">Erfassungsblatt: 1</div>
<div class="t" style="top:185.84px;font-size:12px;line-height:20px;color:#333;letter-spacing:0.22px;left:1001px;">Auftrag: Demo - Auftrags-LV</div>
<div class="t" style="top:203.84px;font-size:12px;line-height:20px;color:#333;letter-spacing:0.22px;left:1001px;">Projekt: ARCH-007 - Neubau in Musterstadt</div>
<div class="t" style="top:226.03px;font-size:10px;line-height:20px;color:#9e9e9e;letter-spacing:-0.1px;left:1001.5px;">VOR 3 MINUTEN</div>
<svg style="left:0;top:0" width="1" height="1"><circle cx="1222.5" cy="235.6" r="4.1" fill="none" stroke="#9a9a9a" stroke-width="1.3" stroke-dasharray="1.5 0.6"/><path d="M1237.6 232.2l7.8 6.6M1245.4 232.2l-7.8 6.6" stroke="#888" stroke-width="1.3"/></svg>
<div class="r" style="left:61px;top:565px;width:1219px;height:36px;background:linear-gradient(180deg,rgba(0,0,0,0),rgba(0,0,0,0.03));"></div>
<div class="r" style="left:931px;top:601px;width:349px;height:15px;background:linear-gradient(180deg,rgba(0,0,0,0.03),rgba(0,0,0,0.05));"></div>
<div class="r" style="left:0px;top:0px;width:1280px;height:1px;background:#b8b8b8;"></div>
</body></html>
